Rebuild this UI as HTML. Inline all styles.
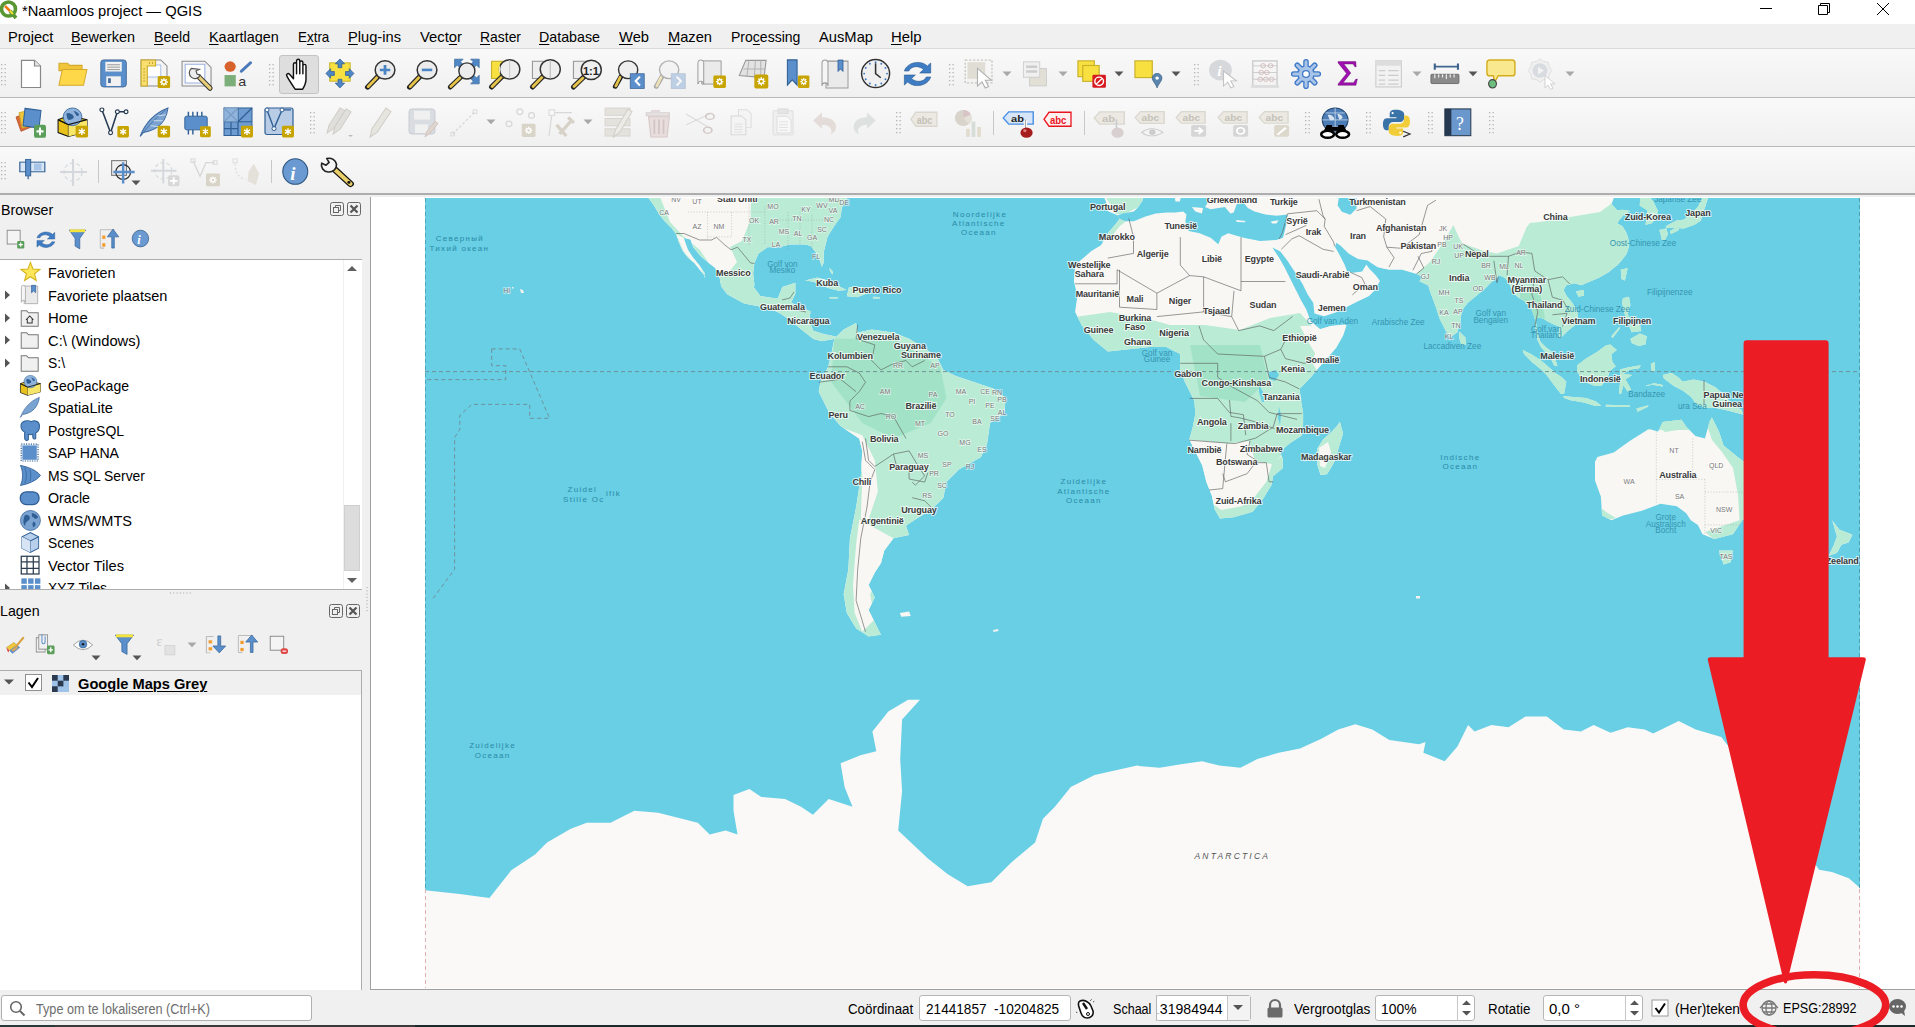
<!DOCTYPE html><html><head><meta charset="utf-8"><style>html,body{margin:0;padding:0}body{width:1915px;height:1027px;overflow:hidden;position:relative;background:#f0f0f0;font-family:"Liberation Sans",sans-serif}u{text-decoration-thickness:1px;text-underline-offset:2px}</style></head><body><div style="position:absolute;left:0px;top:0px;width:1915px;height:24px;background:#fff"></div>
<svg style="position:absolute;left:-1px;top:-1px" width="20" height="22" viewBox="0 0 20 22"><circle cx="9.5" cy="10" r="7" fill="none" stroke="#589632" stroke-width="3.6"/><path d="M11 12l6 7" stroke="#589632" stroke-width="3.6"/><path d="M6 7l5 5" stroke="#ee7913" stroke-width="2.5"/><path d="M11 12l3 3" stroke="#f0e130" stroke-width="2"/></svg>
<div style="position:absolute;left:22.00px;top:2.50px;font:normal 15px/15px 'Liberation Sans',sans-serif;color:#000;white-space:pre;transform:scaleX(0.9814);transform-origin:0 0">*Naamloos project — QGIS</div>
<svg style="position:absolute;left:1755px;top:2px" width="24" height="18" viewBox="0 0 24 18"><path d="M5 6.5h12" stroke="#000" stroke-width="1"/></svg>
<svg style="position:absolute;left:1813px;top:0px" width="24" height="20" viewBox="0 0 24 20"><path d="M5.5 5.5h9v9h-9z M7.5 5.5v-2h9v9h-2" fill="none" stroke="#000" stroke-width="1"/></svg>
<svg style="position:absolute;left:1872px;top:0px" width="24" height="20" viewBox="0 0 24 20"><path d="M5 3l12 12M17 3l-12 12" stroke="#000" stroke-width="1"/></svg>
<div style="position:absolute;left:0px;top:24px;width:1915px;height:25px;background:#f0f0f0"></div>
<div style="position:absolute;left:0px;top:48px;width:1915px;height:1px;background:#dadada"></div>
<div style="position:absolute;left:8.00px;top:28.80px;font:normal 15px/15px 'Liberation Sans',sans-serif;color:#000;white-space:pre;transform:scaleX(0.9724);transform-origin:0 0">Project</div>
<div style="position:absolute;left:71.40px;top:28.80px;font:normal 15px/15px 'Liberation Sans',sans-serif;color:#000;white-space:pre;transform:scaleX(0.9595);transform-origin:0 0"><u>B</u>ewerken</div>
<div style="position:absolute;left:154.00px;top:28.80px;font:normal 15px/15px 'Liberation Sans',sans-serif;color:#000;white-space:pre;transform:scaleX(0.9381);transform-origin:0 0"><u>B</u>eeld</div>
<div style="position:absolute;left:209.30px;top:28.80px;font:normal 15px/15px 'Liberation Sans',sans-serif;color:#000;white-space:pre;transform:scaleX(0.9606);transform-origin:0 0"><u>K</u>aartlagen</div>
<div style="position:absolute;left:297.70px;top:28.80px;font:normal 15px/15px 'Liberation Sans',sans-serif;color:#000;white-space:pre;transform:scaleX(0.8939);transform-origin:0 0">E<u>x</u>tra</div>
<div style="position:absolute;left:348.00px;top:28.80px;font:normal 15px/15px 'Liberation Sans',sans-serif;color:#000;white-space:pre;transform:scaleX(0.9778);transform-origin:0 0"><u>P</u>lug-ins</div>
<div style="position:absolute;left:420.00px;top:28.80px;font:normal 15px/15px 'Liberation Sans',sans-serif;color:#000;white-space:pre;transform:scaleX(0.9875);transform-origin:0 0">Vect<u>o</u>r</div>
<div style="position:absolute;left:480.00px;top:28.80px;font:normal 15px/15px 'Liberation Sans',sans-serif;color:#000;white-space:pre;transform:scaleX(0.9279);transform-origin:0 0"><u>R</u>aster</div>
<div style="position:absolute;left:539.40px;top:28.80px;font:normal 15px/15px 'Liberation Sans',sans-serif;color:#000;white-space:pre;transform:scaleX(0.9499);transform-origin:0 0"><u>D</u>atabase</div>
<div style="position:absolute;left:619.00px;top:28.80px;font:normal 15px/15px 'Liberation Sans',sans-serif;color:#000;white-space:pre;transform:scaleX(0.9811);transform-origin:0 0"><u>W</u>eb</div>
<div style="position:absolute;left:668.00px;top:28.80px;font:normal 15px/15px 'Liberation Sans',sans-serif;color:#000;white-space:pre;transform:scaleX(0.9771);transform-origin:0 0"><u>M</u>azen</div>
<div style="position:absolute;left:730.60px;top:28.80px;font:normal 15px/15px 'Liberation Sans',sans-serif;color:#000;white-space:pre;transform:scaleX(0.9353);transform-origin:0 0">Pro<u>c</u>essing</div>
<div style="position:absolute;left:819.00px;top:28.80px;font:normal 15px/15px 'Liberation Sans',sans-serif;color:#000;white-space:pre;transform:scaleX(0.9813);transform-origin:0 0">AusMap</div>
<div style="position:absolute;left:891.00px;top:28.80px;font:normal 15px/15px 'Liberation Sans',sans-serif;color:#000;white-space:pre;transform:scaleX(0.9916);transform-origin:0 0"><u>H</u>elp</div>
<div style="position:absolute;left:0px;top:49px;width:1915px;height:48px;background:linear-gradient(#f9f9f9,#f0f0f0)"></div>
<div style="position:absolute;left:0px;top:97px;width:1915px;height:1px;background:#b9b9b9"></div>
<div style="position:absolute;left:0px;top:98px;width:1915px;height:48px;background:linear-gradient(#f9f9f9,#f0f0f0)"></div>
<div style="position:absolute;left:0px;top:146px;width:1915px;height:1px;background:#b9b9b9"></div>
<div style="position:absolute;left:0px;top:147px;width:1915px;height:46px;background:linear-gradient(#f9f9f9,#f0f0f0)"></div>
<div style="position:absolute;left:0px;top:193px;width:1915px;height:2px;background:#adadad"></div>
<div style="position:absolute;left:0px;top:195px;width:1915px;height:2px;background:#f0f0f0"></div>
<svg style="position:absolute;left:0;top:0;overflow:visible" width="1" height="1"><rect x="1.0" y="64.0" width="1.3" height="1.3" fill="#b4b4b4"/><rect x="4.5" y="64.0" width="1.3" height="1.3" fill="#b4b4b4"/><rect x="1.0" y="68.0" width="1.3" height="1.3" fill="#b4b4b4"/><rect x="4.5" y="68.0" width="1.3" height="1.3" fill="#b4b4b4"/><rect x="1.0" y="72.0" width="1.3" height="1.3" fill="#b4b4b4"/><rect x="4.5" y="72.0" width="1.3" height="1.3" fill="#b4b4b4"/><rect x="1.0" y="76.0" width="1.3" height="1.3" fill="#b4b4b4"/><rect x="4.5" y="76.0" width="1.3" height="1.3" fill="#b4b4b4"/><rect x="1.0" y="80.0" width="1.3" height="1.3" fill="#b4b4b4"/><rect x="4.5" y="80.0" width="1.3" height="1.3" fill="#b4b4b4"/><rect x="1.0" y="84.0" width="1.3" height="1.3" fill="#b4b4b4"/><rect x="4.5" y="84.0" width="1.3" height="1.3" fill="#b4b4b4"/></svg>
<svg style="position:absolute;left:0;top:0;overflow:visible" width="1" height="1"><rect x="269.0" y="64.0" width="1.3" height="1.3" fill="#b4b4b4"/><rect x="272.5" y="64.0" width="1.3" height="1.3" fill="#b4b4b4"/><rect x="269.0" y="68.0" width="1.3" height="1.3" fill="#b4b4b4"/><rect x="272.5" y="68.0" width="1.3" height="1.3" fill="#b4b4b4"/><rect x="269.0" y="72.0" width="1.3" height="1.3" fill="#b4b4b4"/><rect x="272.5" y="72.0" width="1.3" height="1.3" fill="#b4b4b4"/><rect x="269.0" y="76.0" width="1.3" height="1.3" fill="#b4b4b4"/><rect x="272.5" y="76.0" width="1.3" height="1.3" fill="#b4b4b4"/><rect x="269.0" y="80.0" width="1.3" height="1.3" fill="#b4b4b4"/><rect x="272.5" y="80.0" width="1.3" height="1.3" fill="#b4b4b4"/><rect x="269.0" y="84.0" width="1.3" height="1.3" fill="#b4b4b4"/><rect x="272.5" y="84.0" width="1.3" height="1.3" fill="#b4b4b4"/></svg>
<svg style="position:absolute;left:0;top:0;overflow:visible" width="1" height="1"><rect x="949.0" y="64.0" width="1.3" height="1.3" fill="#b4b4b4"/><rect x="952.5" y="64.0" width="1.3" height="1.3" fill="#b4b4b4"/><rect x="949.0" y="68.0" width="1.3" height="1.3" fill="#b4b4b4"/><rect x="952.5" y="68.0" width="1.3" height="1.3" fill="#b4b4b4"/><rect x="949.0" y="72.0" width="1.3" height="1.3" fill="#b4b4b4"/><rect x="952.5" y="72.0" width="1.3" height="1.3" fill="#b4b4b4"/><rect x="949.0" y="76.0" width="1.3" height="1.3" fill="#b4b4b4"/><rect x="952.5" y="76.0" width="1.3" height="1.3" fill="#b4b4b4"/><rect x="949.0" y="80.0" width="1.3" height="1.3" fill="#b4b4b4"/><rect x="952.5" y="80.0" width="1.3" height="1.3" fill="#b4b4b4"/><rect x="949.0" y="84.0" width="1.3" height="1.3" fill="#b4b4b4"/><rect x="952.5" y="84.0" width="1.3" height="1.3" fill="#b4b4b4"/></svg>
<svg style="position:absolute;left:0;top:0;overflow:visible" width="1" height="1"><rect x="1194.0" y="64.0" width="1.3" height="1.3" fill="#b4b4b4"/><rect x="1197.5" y="64.0" width="1.3" height="1.3" fill="#b4b4b4"/><rect x="1194.0" y="68.0" width="1.3" height="1.3" fill="#b4b4b4"/><rect x="1197.5" y="68.0" width="1.3" height="1.3" fill="#b4b4b4"/><rect x="1194.0" y="72.0" width="1.3" height="1.3" fill="#b4b4b4"/><rect x="1197.5" y="72.0" width="1.3" height="1.3" fill="#b4b4b4"/><rect x="1194.0" y="76.0" width="1.3" height="1.3" fill="#b4b4b4"/><rect x="1197.5" y="76.0" width="1.3" height="1.3" fill="#b4b4b4"/><rect x="1194.0" y="80.0" width="1.3" height="1.3" fill="#b4b4b4"/><rect x="1197.5" y="80.0" width="1.3" height="1.3" fill="#b4b4b4"/><rect x="1194.0" y="84.0" width="1.3" height="1.3" fill="#b4b4b4"/><rect x="1197.5" y="84.0" width="1.3" height="1.3" fill="#b4b4b4"/></svg>
<svg style="position:absolute;left:15.00px;top:59.07px;overflow:visible" width="32.00" height="29.87" viewBox="0 0 32 32" preserveAspectRatio="none"><path d="M6.5 1.5h13l6 6v23h-19z" fill="#fff" stroke="#888" stroke-width="1.2"/><path d="M19.5 1.5v6h6" fill="#e8e8e8" stroke="#888" stroke-width="1.2"/></svg>
<svg style="position:absolute;left:57.07px;top:56.71px;overflow:visible" width="30.90" height="33.52" viewBox="0 0 32 32" preserveAspectRatio="none"><path d="M2 6h9l2 2h13v5H2z" fill="#f0c53a" stroke="#d4a82a" stroke-width="1"/><path d="M2 27L5.5 12H31L27.5 27z" fill="#ffd84a" stroke="#d4a82a" stroke-width="1"/></svg>
<svg style="position:absolute;left:99.18px;top:58.07px;overflow:visible" width="29.14" height="30.86" viewBox="0 0 32 32" preserveAspectRatio="none"><rect x="2" y="2" width="28" height="28" rx="3" fill="#5b8fcb" stroke="#41699a" stroke-width="1"/><rect x="7" y="4" width="18" height="10" fill="#f2f2f2"/><path d="M9 7h14M9 9.5h14M9 12h14" stroke="#888" stroke-width="0.9"/><rect x="8" y="19" width="16" height="10" fill="#f2f2f2"/><rect x="10" y="21" width="3" height="5" fill="#41699a"/></svg>
<svg style="position:absolute;left:137.89px;top:57.00px;overflow:visible" width="33.14" height="32.00" viewBox="0 0 32 32" preserveAspectRatio="none"><path d="M3 3h19l6 6v20H3z" fill="#f4f4f4" stroke="#8a8a8a"/><path d="M8 8h14v12H8z" fill="#fff" stroke="#9ab0e0" stroke-width="0.8"/><path d="M3 3h14v6H9v20H3z" fill="#f8df6f" stroke="#c9a826"/><path d="M5 12h2M5 15h2M5 18h2M5 21h2M5 24h2M11 5v2M14 5v2" stroke="#b8941c" stroke-width="0.8"/><rect x="19" y="19" width="12" height="12" rx="1.5" fill="#c8a400"/><g transform="translate(25.0,25.0)" stroke="#fff" stroke-width="1.3" fill="none"><circle r="2"/><path d="M0-3.8V-2.3M0 2.3V3.8M-3.8 0H-2.3M2.3 0H3.8M-2.7-2.7l1.1 1.1M1.6 1.6l1.1 1.1M-2.7 2.7l1.1-1.1M1.6-1.6l1.1-1.1"/></g></svg>
<svg style="position:absolute;left:179.93px;top:56.85px;overflow:visible" width="33.14" height="33.23" viewBox="0 0 32 32" preserveAspectRatio="none"><path d="M2 4h22l6 6v18H2z" fill="#f4f4f4" stroke="#8a8a8a"/><path d="M5 7h19v18H5z" fill="#fff" stroke="#9ab0e0" stroke-width="1"/><path d="M29 30L18 19" stroke="#333" stroke-width="5" stroke-linecap="round"/><path d="M29 30L18 19" stroke="#e9cf78" stroke-width="3" stroke-linecap="round"/><path d="M11 11a5.5 5.5 0 1 0 8.5 6.5l-3-1-1-3 3-1.5z" fill="#eee" stroke="#555" stroke-width="1.2"/></svg>
<svg style="position:absolute;left:222.45px;top:58.64px;overflow:visible" width="32.63" height="30.19" viewBox="0 0 32 32" preserveAspectRatio="none"><circle cx="8" cy="8" r="5.5" fill="#d8622c"/><path d="M19 13L28 4" stroke="#4a78b8" stroke-width="3" stroke-linecap="round"/><rect x="2.5" y="17" width="11" height="12" fill="#7cae7a"/><text x="16" y="28.5" font-family="Liberation Sans" font-size="14" fill="#333">a</text></svg>
<div style="position:absolute;left:279px;top:55px;width:40px;height:39px;background:#dedede;border:1px solid #c4c4c4;border-radius:3px;box-sizing:border-box"></div>
<svg style="position:absolute;left:284.22px;top:56.78px;overflow:visible" width="35.56" height="35.56" viewBox="0 0 32 32" preserveAspectRatio="none"><path d="M10 29c-2-3-6-9-7.5-12-.8-1.6 1.2-2.8 2.5-1.5l3.5 4V6.5c0-1.8 2.8-1.8 2.8 0V15V3.5c0-1.9 2.9-1.9 2.9 0V15V5c0-1.8 2.8-1.8 2.8 0v10V8c0-1.8 2.8-1.8 2.8 0v12c0 4-1.5 6.5-3 9z" fill="#fff" stroke="#111" stroke-width="1.3" stroke-linejoin="round"/></svg>
<svg style="position:absolute;left:325.07px;top:58.03px;overflow:visible" width="29.87" height="30.93" viewBox="0 0 32 32" preserveAspectRatio="none"><rect x="5" y="5" width="22" height="19" fill="#f7e03f" stroke="#c9b02b"/><g fill="#4f86c6" stroke="#2f5f94" stroke-width="0.8"><path d="M16 1l5 5h-3v4h-4V6h-3z"/><path d="M16 31l5-5h-3v-4h-4v4h-3z"/><path d="M1 16l5-5v3h4v4H6v3z"/><path d="M31 16l-5-5v3h-4v4h4v3z"/></g></svg>
<svg style="position:absolute;left:362.52px;top:56.77px;overflow:visible" width="37.12" height="34.46" viewBox="0 0 32 32" preserveAspectRatio="none"><path d="M12.9 18.1L4 28" stroke="#222" stroke-width="4.6" stroke-linecap="round"/><path d="M11.9 19.1L4.5 27.5" stroke="#e6c34a" stroke-width="2.6" stroke-linecap="round"/><circle cx="19" cy="12" r="8.5" fill="#ececec" stroke="#333" stroke-width="1.3"/><path d="M19 7.5v9M14.5 12h9" stroke="#4a84c4" stroke-width="2.4"/></svg>
<svg style="position:absolute;left:404.52px;top:56.77px;overflow:visible" width="37.12" height="34.46" viewBox="0 0 32 32" preserveAspectRatio="none"><path d="M12.9 18.1L4 28" stroke="#222" stroke-width="4.6" stroke-linecap="round"/><path d="M11.9 19.1L4.5 27.5" stroke="#e6c34a" stroke-width="2.6" stroke-linecap="round"/><circle cx="19" cy="12" r="8.5" fill="#ececec" stroke="#333" stroke-width="1.3"/><path d="M14.5 12h9" stroke="#4a84c4" stroke-width="2.4"/></svg>
<svg style="position:absolute;left:445.79px;top:56.85px;overflow:visible" width="34.29" height="34.37" viewBox="0 0 32 32" preserveAspectRatio="none"><g fill="#4f86c6" stroke="#2f5f94" stroke-width="0.6"><path d="M8 2h8l-2.5 2.5 3 3-3 3-3-3L8 10z"/><path d="M31 2v8l-2.5-2.5-3 3-3-3 3-3L23 2z"/><path d="M31 25v-8l-2.5 2.5-3-3-3 3 3 3-2.5 2.5z"/></g><path d="M14.1 18.4L4 28" stroke="#222" stroke-width="4.6" stroke-linecap="round"/><path d="M13.1 19.4L4.5 27.5" stroke="#e6c34a" stroke-width="2.6" stroke-linecap="round"/><circle cx="19.5" cy="13" r="7.5" fill="#ececec" stroke="#333" stroke-width="1.3"/></svg>
<svg style="position:absolute;left:486.60px;top:56.85px;overflow:visible" width="36.23" height="34.37" viewBox="0 0 32 32" preserveAspectRatio="none"><rect x="4" y="4" width="12" height="16" fill="#f7e03f" stroke="#c9b02b"/><path d="M13.5 18.0L4 28" stroke="#222" stroke-width="4.6" stroke-linecap="round"/><path d="M12.5 19.0L4.5 27.5" stroke="#e6c34a" stroke-width="2.6" stroke-linecap="round"/><circle cx="20" cy="11.5" r="9" fill="#eee" stroke="#333" stroke-width="1.3"/><path d="M20 3v17" stroke="#ccc" stroke-width="1"/><path d="M11.5 7a9 9 0 0 0 0 9" fill="#f0e6b0"/></svg>
<svg style="position:absolute;left:528.16px;top:56.85px;overflow:visible" width="35.62" height="34.37" viewBox="0 0 32 32" preserveAspectRatio="none"><rect x="4" y="4" width="12" height="16" fill="#eee" stroke="#999"/><path d="M13.5 18.0L4 28" stroke="#222" stroke-width="4.6" stroke-linecap="round"/><path d="M12.5 19.0L4.5 27.5" stroke="#e6c34a" stroke-width="2.6" stroke-linecap="round"/><circle cx="20" cy="11.5" r="9" fill="#eee" stroke="#333" stroke-width="1.3"/><path d="M20 3v17" stroke="#bbb" stroke-width="1"/></svg>
<svg style="position:absolute;left:569.16px;top:56.85px;overflow:visible" width="35.62" height="34.37" viewBox="0 0 32 32" preserveAspectRatio="none"><rect x="4" y="4" width="12" height="16" fill="#eee" stroke="#999"/><path d="M13.5 18.5L4 28" stroke="#222" stroke-width="4.6" stroke-linecap="round"/><path d="M12.5 19.5L4.5 27.5" stroke="#e6c34a" stroke-width="2.6" stroke-linecap="round"/><circle cx="20" cy="12" r="9" fill="#eee" stroke="#333" stroke-width="1.3"/><text x="12.5" y="17" font-family="Liberation Sans" font-weight="bold" font-size="10" fill="#222">1:1</text></svg>
<svg style="position:absolute;left:610.79px;top:58.53px;overflow:visible" width="34.29" height="31.44" viewBox="0 0 32 32" preserveAspectRatio="none"><g><path d="M9.5 17.5L4 28" stroke="#222" stroke-width="4.6" stroke-linecap="round"/><path d="M8.5 18.5L4.5 27.5" stroke="#e6c34a" stroke-width="2.6" stroke-linecap="round"/><circle cx="16" cy="11" r="9" fill="#eee" stroke="#333" stroke-width="1.3"/><rect x="18" y="15" width="13" height="15" fill="#5b8fcb" stroke="#41699a" stroke-width="0.8"/><path d="M27 18l-4 4.5 4 4.5" fill="none" stroke="#fff" stroke-width="2"/></g></svg>
<svg style="position:absolute;left:651.79px;top:58.53px;overflow:visible" width="34.29" height="31.44" viewBox="0 0 32 32" preserveAspectRatio="none"><g opacity="0.35"><path d="M9.5 17.5L4 28" stroke="#222" stroke-width="4.6" stroke-linecap="round"/><path d="M8.5 18.5L4.5 27.5" stroke="#e6c34a" stroke-width="2.6" stroke-linecap="round"/><circle cx="16" cy="11" r="9" fill="#eee" stroke="#333" stroke-width="1.3"/><rect x="18" y="15" width="13" height="15" fill="#5b8fcb" stroke="#41699a" stroke-width="0.8"/><path d="M23 18l4 4.5-4 4.5" fill="none" stroke="#fff" stroke-width="2"/></g></svg>
<svg style="position:absolute;left:696.07px;top:58.07px;overflow:visible" width="30.90" height="30.90" viewBox="0 0 32 32" preserveAspectRatio="none"><path d="M6 3h20v24H6z" fill="#eaeaea" stroke="#999"/><path d="M2 5a3 3 0 0 1 6 0v22a3 3 0 0 0-6 0z" fill="#f5f5f5" stroke="#999"/><rect x="18" y="18" width="13" height="13" rx="1.5" fill="#c8a400"/><g transform="translate(24.5,24.5)" stroke="#fff" stroke-width="1.3" fill="none"><circle r="2"/><path d="M0-3.8V-2.3M0 2.3V3.8M-3.8 0H-2.3M2.3 0H3.8M-2.7-2.7l1.1 1.1M1.6 1.6l1.1 1.1M-2.7 2.7l1.1-1.1M1.6-1.6l1.1-1.1"/></g></svg>
<svg style="position:absolute;left:734.70px;top:54.62px;overflow:visible" width="34.37" height="34.46" viewBox="0 0 32 32" preserveAspectRatio="none"><path d="M4 19L10 5h19l-2 16z" fill="#e2e2e2" stroke="#999"/><path d="M8 13h20M13 5l-2 15M19 5l-1 16M24 5v16" stroke="#aaa" stroke-width="0.8" fill="none"/><rect x="18" y="18" width="13" height="13" rx="1.5" fill="#c8a400"/><g transform="translate(24.5,24.5)" stroke="#fff" stroke-width="1.3" fill="none"><circle r="2"/><path d="M0-3.8V-2.3M0 2.3V3.8M-3.8 0H-2.3M2.3 0H3.8M-2.7-2.7l1.1 1.1M1.6 1.6l1.1 1.1M-2.7 2.7l1.1-1.1M1.6-1.6l1.1-1.1"/></g></svg>
<svg style="position:absolute;left:782.60px;top:58.07px;overflow:visible" width="28.16" height="30.90" viewBox="0 0 32 32" preserveAspectRatio="none"><path d="M5 2h11v26l-5.5-5.5L5 28z" fill="#5b8fcb" stroke="#2f5f94" stroke-width="1.2"/><rect x="17" y="18" width="13" height="13" rx="1.5" fill="#c8a400"/><g transform="translate(23.5,24.5)" stroke="#fff" stroke-width="1.3" fill="none"><circle r="2"/><path d="M0-3.8V-2.3M0 2.3V3.8M-3.8 0H-2.3M2.3 0H3.8M-2.7-2.7l1.1 1.1M1.6 1.6l1.1 1.1M-2.7 2.7l1.1-1.1M1.6-1.6l1.1-1.1"/></g></svg>
<svg style="position:absolute;left:820.00px;top:57.93px;overflow:visible" width="32.00" height="33.19" viewBox="0 0 32 32" preserveAspectRatio="none"><path d="M6 3h22v26H6z" fill="#eaeaea" stroke="#999"/><path d="M2 5a3 3 0 0 1 6 0v22a3 3 0 0 0-6 0z" fill="#f5f5f5" stroke="#999"/><path d="M18 2h5v11l-2.5-2.5L18 13z" fill="#5b8fcb" stroke="#2f5f94" stroke-width="0.8"/></svg>
<svg style="position:absolute;left:859.41px;top:57.41px;overflow:visible" width="33.19" height="33.19" viewBox="0 0 32 32" preserveAspectRatio="none"><circle cx="16" cy="16" r="13.5" fill="#f0f0f0" stroke="#333" stroke-width="1.4"/><circle cx="27.0" cy="16.0" r="0.9" fill="#3a78c2"/><circle cx="25.5" cy="21.5" r="0.9" fill="#3a78c2"/><circle cx="21.5" cy="25.5" r="0.9" fill="#3a78c2"/><circle cx="16.0" cy="27.0" r="0.9" fill="#3a78c2"/><circle cx="10.5" cy="25.5" r="0.9" fill="#3a78c2"/><circle cx="6.5" cy="21.5" r="0.9" fill="#3a78c2"/><circle cx="5.0" cy="16.0" r="0.9" fill="#3a78c2"/><circle cx="6.5" cy="10.5" r="0.9" fill="#3a78c2"/><circle cx="10.5" cy="6.5" r="0.9" fill="#3a78c2"/><circle cx="16.0" cy="5.0" r="0.9" fill="#3a78c2"/><circle cx="21.5" cy="6.5" r="0.9" fill="#3a78c2"/><circle cx="25.5" cy="10.5" r="0.9" fill="#3a78c2"/><path d="M16 6v10l5 4" fill="none" stroke="#333" stroke-width="1.5"/></svg>
<svg style="position:absolute;left:900.32px;top:58.00px;overflow:visible" width="35.07" height="32.00" viewBox="0 0 32 32" preserveAspectRatio="none"><path d="M4 13C6 5 18 1 25 8l3-3v10H18l3.5-3.5C17 7 10 8 8 13z" fill="#3e7cc4" stroke="#2a5a92" stroke-width="0.6"/><path d="M28 19C26 27 14 31 7 24l-3 3V17h10l-3.5 3.5C15 25 22 24 24 19z" fill="#3e7cc4" stroke="#2a5a92" stroke-width="0.6"/></svg>
<svg style="position:absolute;left:962.77px;top:57.93px;overflow:visible" width="35.69" height="33.19" viewBox="0 0 32 32" preserveAspectRatio="none"><rect x="2" y="2" width="24" height="22" fill="none" stroke="#c8c8c0" stroke-width="1.2" stroke-dasharray="2 1.5"/><rect x="4" y="4" width="16" height="16" fill="#e0ddd4"/><path d="M13 10v17l4-4 3 6 3-1.5-3-6h5.5z" fill="#fff" stroke="#b0b0b0" stroke-width="1"/></svg>
<svg style="position:absolute;left:1001.7px;top:71.0px" width="10" height="6"><path d="M0.5 0.5h9l-4.5 4.8z" fill="#a8a8a8"/></svg>
<svg style="position:absolute;left:1021.44px;top:59.12px;overflow:visible" width="27.26" height="30.72" viewBox="0 0 32 32" preserveAspectRatio="none"><rect x="10" y="10" width="20" height="18" fill="#e2dfd6" stroke="#ccc"/><rect x="3" y="3" width="19" height="16" fill="#f0f0f0" stroke="#ccc"/><path d="M6 8h13M6 13h13" stroke="#ccc" stroke-width="2.5"/></svg>
<svg style="position:absolute;left:1057.5px;top:71.0px" width="10" height="6"><path d="M0.5 0.5h9l-4.5 4.8z" fill="#a8a8a8"/></svg>
<svg style="position:absolute;left:1076.07px;top:59.14px;overflow:visible" width="30.90" height="29.79" viewBox="0 0 32 32" preserveAspectRatio="none"><rect x="2" y="2" width="17" height="17" fill="#f7e03f" stroke="#c9b02b" stroke-width="1.2"/><rect x="7" y="7" width="17" height="17" fill="#f7e03f" stroke="#c9b02b" stroke-width="1.2"/><rect x="17" y="17" width="14" height="14" rx="1.5" fill="#d71920"/><circle cx="24" cy="24" r="4.5" fill="none" stroke="#fff" stroke-width="1.5"/><path d="M21 27l6-6" stroke="#fff" stroke-width="1.5"/></svg>
<svg style="position:absolute;left:1113.7px;top:71.0px" width="10" height="6"><path d="M0.5 0.5h9l-4.5 4.8z" fill="#555"/></svg>
<svg style="position:absolute;left:1133.07px;top:59.14px;overflow:visible" width="30.86" height="29.79" viewBox="0 0 32 32" preserveAspectRatio="none"><rect x="2" y="2" width="18" height="18" fill="#f7e03f" stroke="#c9b02b" stroke-width="1.2"/><path d="M25 31c-1-4-5-7-5-10.5a5 5 0 0 1 10 0c0 3.5-4 6.5-5 10.5z" fill="#5a86ae" stroke="#3b6387" stroke-width="0.8"/><circle cx="25" cy="20.5" r="1.8" fill="#fff"/></svg>
<svg style="position:absolute;left:1170.6px;top:71.0px" width="10" height="6"><path d="M0.5 0.5h9l-4.5 4.8z" fill="#555"/></svg>
<svg style="position:absolute;left:1206.93px;top:58.13px;overflow:visible" width="33.12" height="29.87" viewBox="0 0 32 32" preserveAspectRatio="none"><circle cx="13" cy="13" r="11" fill="#d6d8dc"/><text x="10" y="19" font-family="Liberation Serif" font-style="italic" font-weight="bold" font-size="15" fill="#fff">i</text><path d="M16 14v16l4-4 3 6 3-1.5-3-6h5.5z" fill="#fff" stroke="#c0c0c0" stroke-width="1"/></svg>
<svg style="position:absolute;left:1250.07px;top:59.07px;overflow:visible" width="29.87" height="30.86" viewBox="0 0 32 32" preserveAspectRatio="none"><rect x="3" y="2" width="26" height="26" fill="none" stroke="#ccc" stroke-width="1.5"/><rect x="1" y="27" width="30" height="3" fill="#ddd"/><path d="M3 7h26" stroke="#ccc" stroke-width="1"/><ellipse cx="14" cy="7" rx="2.6" ry="2.2" fill="none" stroke="#d4baba" stroke-width="1"/><ellipse cx="22" cy="7" rx="2.6" ry="2.2" fill="none" stroke="#d4baba" stroke-width="1"/><path d="M3 14h26" stroke="#ccc" stroke-width="1"/><ellipse cx="12" cy="14" rx="2.6" ry="2.2" fill="none" stroke="#d4baba" stroke-width="1"/><ellipse cx="18" cy="14" rx="2.6" ry="2.2" fill="none" stroke="#d4baba" stroke-width="1"/><path d="M3 21h26" stroke="#ccc" stroke-width="1"/><ellipse cx="11" cy="21" rx="2.6" ry="2.2" fill="none" stroke="#d4baba" stroke-width="1"/><ellipse cx="17" cy="21" rx="2.6" ry="2.2" fill="none" stroke="#d4baba" stroke-width="1"/><ellipse cx="23" cy="21" rx="2.6" ry="2.2" fill="none" stroke="#d4baba" stroke-width="1"/></svg>
<svg style="position:absolute;left:1290.00px;top:58.00px;overflow:visible" width="32.00" height="32.00" viewBox="0 0 32 32" preserveAspectRatio="none"><path d="M16 16L16.00 3.70M16 16L24.70 7.30M16 16L28.30 16.00M16 16L24.70 24.70M16 16L16.00 28.30M16 16L7.30 24.70M16 16L3.70 16.00M16 16L7.30 7.30" stroke="#3f78c8" stroke-width="5.6" stroke-linecap="round"/><circle cx="16" cy="16" r="8.8" fill="#3f78c8"/><path d="M16 16L16.00 3.70M16 16L24.70 7.30M16 16L28.30 16.00M16 16L24.70 24.70M16 16L16.00 28.30M16 16L7.30 24.70M16 16L3.70 16.00M16 16L7.30 7.30" stroke="#a8c5e8" stroke-width="3.0" stroke-linecap="round"/><circle cx="16" cy="16" r="7.4" fill="#a8c5e8"/><circle cx="16" cy="16" r="3.4" fill="#fff" stroke="#3f78c8" stroke-width="1.3"/></svg>
<svg style="position:absolute;left:1335.42px;top:59.28px;overflow:visible" width="24.67" height="27.59" viewBox="0 0 32 32" preserveAspectRatio="none"><path d="M4 3h23l0.5 6h-1.8l-2.2-3.2H11.5l9 10.5-10 11.2h13.5l3.2-4.2h1.8l-1.8 7.2H4v-1.5l11-12.2L4 4.5z" fill="#a010b0" stroke="#5a0a60" stroke-width="0.5"/></svg>
<svg style="position:absolute;left:1374.11px;top:59.07px;overflow:visible" width="30.22" height="30.81" viewBox="0 0 32 32" preserveAspectRatio="none"><rect x="2" y="2" width="27" height="27" fill="#f2f2f2" stroke="#ccc" stroke-width="1.2"/><rect x="2" y="2" width="27" height="5" fill="#ddd"/><path d="M5 12h7M15 12h11M5 17h7M15 17h11M5 22h7M15 22h11M5 26h7M15 26h11" stroke="#ccc" stroke-width="1.3"/></svg>
<svg style="position:absolute;left:1411.6px;top:71.0px" width="10" height="6"><path d="M0.5 0.5h9l-4.5 4.8z" fill="#a8a8a8"/></svg>
<svg style="position:absolute;left:1429.07px;top:62.46px;overflow:visible" width="30.90" height="24.62" viewBox="0 0 32 32" preserveAspectRatio="none"><path d="M6 6h24M6 2v8M30 2v8" stroke="#3f6590" stroke-width="2.2"/><rect x="2" y="16" width="29" height="12" rx="1" fill="#8a8a8a" stroke="#666"/><path d="M6 16v5M10 16v4M14 16v4M18 16v6M22 16v4M26 16v4" stroke="#eee" stroke-width="1.2"/></svg>
<svg style="position:absolute;left:1467.6px;top:71.0px" width="10" height="6"><path d="M0.5 0.5h9l-4.5 4.8z" fill="#555"/></svg>
<svg style="position:absolute;left:1486.07px;top:57.02px;overflow:visible" width="29.87" height="31.77" viewBox="0 0 32 32" preserveAspectRatio="none"><path d="M4 3h24a3 3 0 0 1 3 3v10a3 3 0 0 1-3 3H13l-4 7-1-7H4a3 3 0 0 1-3-3V6a3 3 0 0 1 3-3z" fill="#fae88f" stroke="#d4ad1c" stroke-width="1.5"/><circle cx="7" cy="27" r="4.2" fill="#6ebf7f" stroke="#444" stroke-width="1.2"/></svg>
<svg style="position:absolute;left:1527.00px;top:58.03px;overflow:visible" width="32.00" height="30.97" viewBox="0 0 32 32" preserveAspectRatio="none"><polygon points="25.0,13.0 22.2,16.8 21.5,21.5 16.8,22.2 13.0,25.0 9.2,22.2 4.5,21.5 3.8,16.8 1.0,13.0 3.8,9.2 4.5,4.5 9.2,3.8 13.0,1.0 16.8,3.8 21.5,4.5 22.2,9.2" fill="#f0f0f0" stroke="#ddd" stroke-width="1"/><circle cx="13" cy="13" r="7.5" fill="#d8dbe0"/><path d="M11 9v8l6-4z" fill="#f3f3f3"/><path d="M18 18v13l3-3 2.5 4.5 2.5-1.2-2.5-4.5h4.5z" fill="#fff" stroke="#d0d0d0"/></svg>
<svg style="position:absolute;left:1565.0px;top:71.0px" width="10" height="6"><path d="M0.5 0.5h9l-4.5 4.8z" fill="#a8a8a8"/></svg>
<svg style="position:absolute;left:0;top:0;overflow:visible" width="1" height="1"><rect x="1.0" y="112.0" width="1.3" height="1.3" fill="#b4b4b4"/><rect x="4.5" y="112.0" width="1.3" height="1.3" fill="#b4b4b4"/><rect x="1.0" y="116.0" width="1.3" height="1.3" fill="#b4b4b4"/><rect x="4.5" y="116.0" width="1.3" height="1.3" fill="#b4b4b4"/><rect x="1.0" y="120.0" width="1.3" height="1.3" fill="#b4b4b4"/><rect x="4.5" y="120.0" width="1.3" height="1.3" fill="#b4b4b4"/><rect x="1.0" y="124.0" width="1.3" height="1.3" fill="#b4b4b4"/><rect x="4.5" y="124.0" width="1.3" height="1.3" fill="#b4b4b4"/><rect x="1.0" y="128.0" width="1.3" height="1.3" fill="#b4b4b4"/><rect x="4.5" y="128.0" width="1.3" height="1.3" fill="#b4b4b4"/><rect x="1.0" y="132.0" width="1.3" height="1.3" fill="#b4b4b4"/><rect x="4.5" y="132.0" width="1.3" height="1.3" fill="#b4b4b4"/></svg>
<svg style="position:absolute;left:0;top:0;overflow:visible" width="1" height="1"><rect x="310.0" y="112.0" width="1.3" height="1.3" fill="#b4b4b4"/><rect x="313.5" y="112.0" width="1.3" height="1.3" fill="#b4b4b4"/><rect x="310.0" y="116.0" width="1.3" height="1.3" fill="#b4b4b4"/><rect x="313.5" y="116.0" width="1.3" height="1.3" fill="#b4b4b4"/><rect x="310.0" y="120.0" width="1.3" height="1.3" fill="#b4b4b4"/><rect x="313.5" y="120.0" width="1.3" height="1.3" fill="#b4b4b4"/><rect x="310.0" y="124.0" width="1.3" height="1.3" fill="#b4b4b4"/><rect x="313.5" y="124.0" width="1.3" height="1.3" fill="#b4b4b4"/><rect x="310.0" y="128.0" width="1.3" height="1.3" fill="#b4b4b4"/><rect x="313.5" y="128.0" width="1.3" height="1.3" fill="#b4b4b4"/><rect x="310.0" y="132.0" width="1.3" height="1.3" fill="#b4b4b4"/><rect x="313.5" y="132.0" width="1.3" height="1.3" fill="#b4b4b4"/></svg>
<svg style="position:absolute;left:0;top:0;overflow:visible" width="1" height="1"><rect x="896.0" y="112.0" width="1.3" height="1.3" fill="#b4b4b4"/><rect x="899.5" y="112.0" width="1.3" height="1.3" fill="#b4b4b4"/><rect x="896.0" y="116.0" width="1.3" height="1.3" fill="#b4b4b4"/><rect x="899.5" y="116.0" width="1.3" height="1.3" fill="#b4b4b4"/><rect x="896.0" y="120.0" width="1.3" height="1.3" fill="#b4b4b4"/><rect x="899.5" y="120.0" width="1.3" height="1.3" fill="#b4b4b4"/><rect x="896.0" y="124.0" width="1.3" height="1.3" fill="#b4b4b4"/><rect x="899.5" y="124.0" width="1.3" height="1.3" fill="#b4b4b4"/><rect x="896.0" y="128.0" width="1.3" height="1.3" fill="#b4b4b4"/><rect x="899.5" y="128.0" width="1.3" height="1.3" fill="#b4b4b4"/><rect x="896.0" y="132.0" width="1.3" height="1.3" fill="#b4b4b4"/><rect x="899.5" y="132.0" width="1.3" height="1.3" fill="#b4b4b4"/></svg>
<svg style="position:absolute;left:0;top:0;overflow:visible" width="1" height="1"><rect x="1305.0" y="112.0" width="1.3" height="1.3" fill="#b4b4b4"/><rect x="1308.5" y="112.0" width="1.3" height="1.3" fill="#b4b4b4"/><rect x="1305.0" y="116.0" width="1.3" height="1.3" fill="#b4b4b4"/><rect x="1308.5" y="116.0" width="1.3" height="1.3" fill="#b4b4b4"/><rect x="1305.0" y="120.0" width="1.3" height="1.3" fill="#b4b4b4"/><rect x="1308.5" y="120.0" width="1.3" height="1.3" fill="#b4b4b4"/><rect x="1305.0" y="124.0" width="1.3" height="1.3" fill="#b4b4b4"/><rect x="1308.5" y="124.0" width="1.3" height="1.3" fill="#b4b4b4"/><rect x="1305.0" y="128.0" width="1.3" height="1.3" fill="#b4b4b4"/><rect x="1308.5" y="128.0" width="1.3" height="1.3" fill="#b4b4b4"/><rect x="1305.0" y="132.0" width="1.3" height="1.3" fill="#b4b4b4"/><rect x="1308.5" y="132.0" width="1.3" height="1.3" fill="#b4b4b4"/></svg>
<svg style="position:absolute;left:0;top:0;overflow:visible" width="1" height="1"><rect x="1366.0" y="112.0" width="1.3" height="1.3" fill="#b4b4b4"/><rect x="1369.5" y="112.0" width="1.3" height="1.3" fill="#b4b4b4"/><rect x="1366.0" y="116.0" width="1.3" height="1.3" fill="#b4b4b4"/><rect x="1369.5" y="116.0" width="1.3" height="1.3" fill="#b4b4b4"/><rect x="1366.0" y="120.0" width="1.3" height="1.3" fill="#b4b4b4"/><rect x="1369.5" y="120.0" width="1.3" height="1.3" fill="#b4b4b4"/><rect x="1366.0" y="124.0" width="1.3" height="1.3" fill="#b4b4b4"/><rect x="1369.5" y="124.0" width="1.3" height="1.3" fill="#b4b4b4"/><rect x="1366.0" y="128.0" width="1.3" height="1.3" fill="#b4b4b4"/><rect x="1369.5" y="128.0" width="1.3" height="1.3" fill="#b4b4b4"/><rect x="1366.0" y="132.0" width="1.3" height="1.3" fill="#b4b4b4"/><rect x="1369.5" y="132.0" width="1.3" height="1.3" fill="#b4b4b4"/></svg>
<svg style="position:absolute;left:0;top:0;overflow:visible" width="1" height="1"><rect x="1428.0" y="112.0" width="1.3" height="1.3" fill="#b4b4b4"/><rect x="1431.5" y="112.0" width="1.3" height="1.3" fill="#b4b4b4"/><rect x="1428.0" y="116.0" width="1.3" height="1.3" fill="#b4b4b4"/><rect x="1431.5" y="116.0" width="1.3" height="1.3" fill="#b4b4b4"/><rect x="1428.0" y="120.0" width="1.3" height="1.3" fill="#b4b4b4"/><rect x="1431.5" y="120.0" width="1.3" height="1.3" fill="#b4b4b4"/><rect x="1428.0" y="124.0" width="1.3" height="1.3" fill="#b4b4b4"/><rect x="1431.5" y="124.0" width="1.3" height="1.3" fill="#b4b4b4"/><rect x="1428.0" y="128.0" width="1.3" height="1.3" fill="#b4b4b4"/><rect x="1431.5" y="128.0" width="1.3" height="1.3" fill="#b4b4b4"/><rect x="1428.0" y="132.0" width="1.3" height="1.3" fill="#b4b4b4"/><rect x="1431.5" y="132.0" width="1.3" height="1.3" fill="#b4b4b4"/></svg>
<svg style="position:absolute;left:0;top:0;overflow:visible" width="1" height="1"><rect x="1489.0" y="112.0" width="1.3" height="1.3" fill="#b4b4b4"/><rect x="1492.5" y="112.0" width="1.3" height="1.3" fill="#b4b4b4"/><rect x="1489.0" y="116.0" width="1.3" height="1.3" fill="#b4b4b4"/><rect x="1492.5" y="116.0" width="1.3" height="1.3" fill="#b4b4b4"/><rect x="1489.0" y="120.0" width="1.3" height="1.3" fill="#b4b4b4"/><rect x="1492.5" y="120.0" width="1.3" height="1.3" fill="#b4b4b4"/><rect x="1489.0" y="124.0" width="1.3" height="1.3" fill="#b4b4b4"/><rect x="1492.5" y="124.0" width="1.3" height="1.3" fill="#b4b4b4"/><rect x="1489.0" y="128.0" width="1.3" height="1.3" fill="#b4b4b4"/><rect x="1492.5" y="128.0" width="1.3" height="1.3" fill="#b4b4b4"/><rect x="1489.0" y="132.0" width="1.3" height="1.3" fill="#b4b4b4"/><rect x="1492.5" y="132.0" width="1.3" height="1.3" fill="#b4b4b4"/></svg>
<svg style="position:absolute;left:15.00px;top:103.63px;overflow:visible" width="32.00" height="34.96" viewBox="0 0 32 32" preserveAspectRatio="none"><path d="M1 12l13-5 5 13-13 5z" fill="#db6b35" stroke="#b5532a" stroke-width="0.8"/><path d="M4 8l13-3 3 14-13 3z" fill="#f0c53a" stroke="#c9a52a" stroke-width="0.8"/><path d="M10 4l16 2-2 16-16-2z" fill="#5b8fcb" stroke="#2f5f94" stroke-width="1"/><rect x="19" y="19" width="12" height="12" rx="2" fill="#5a9e5a"/><path d="M25.0 21.5V28.5M21.5 25.0H28.5" stroke="#fff" stroke-width="2"/></svg>
<svg style="position:absolute;left:55.93px;top:106.03px;overflow:visible" width="33.10" height="31.47" viewBox="0 0 32 32" preserveAspectRatio="none"><path d="M2 14l10-4 18 4v12l-18 5-10-4z" fill="#e8c21a" stroke="#111" stroke-width="1"/><path d="M12 19v12M2 14l10 5 18-5" fill="none" stroke="#111" stroke-width="1"/><path d="M12 19l18-5v12l-18 5z" fill="#f7e66a"/><circle cx="16" cy="11" r="9" fill="#8fb3dd" stroke="#2f5f94" stroke-width="0.8"/><path d="M10 8c2-2 5 0 6 1s2 3 0 4-3 2-5 0zM17 5c2 0 4 2 5 3s-1 3-2 2z" fill="#2f5f94"/><path d="M2 14l10 5 18-5" fill="none" stroke="#111" stroke-width="1.2"/><rect x="19" y="20" width="12" height="12" rx="1.5" fill="#c8a400"/><g transform="translate(25.0,26.0)" stroke="#fff" stroke-width="1.4" fill="none"><path d="M0-3.5V3.5M-3-1.75L3 1.75M-3 1.75L3-1.75"/></g></svg>
<svg style="position:absolute;left:99.03px;top:107.05px;overflow:visible" width="30.93" height="30.45" viewBox="0 0 32 32" preserveAspectRatio="none"><path d="M3 3l9 24 7-22h8" fill="none" stroke="#263b53" stroke-width="1.6"/><circle cx="3" cy="3" r="2" fill="#fff" stroke="#263b53" stroke-width="1.2"/><circle cx="12" cy="27" r="2" fill="#fff" stroke="#263b53" stroke-width="1.2"/><circle cx="19" cy="5" r="2" fill="#fff" stroke="#263b53" stroke-width="1.2"/><circle cx="28" cy="5" r="2" fill="#fff" stroke="#263b53" stroke-width="1.2"/><rect x="19" y="20" width="12" height="12" rx="1.5" fill="#c8a400"/><g transform="translate(25.0,26.0)" stroke="#fff" stroke-width="1.4" fill="none"><path d="M0-3.5V3.5M-3-1.75L3 1.75M-3 1.75L3-1.75"/></g></svg>
<svg style="position:absolute;left:137.93px;top:106.03px;overflow:visible" width="33.10" height="31.47" viewBox="0 0 32 32" preserveAspectRatio="none"><path d="M2 31C6 20 14 8 29 2c-1 8-5 16-11 20-4 3-9 4-13 5z" fill="#7ba3d2" stroke="#3c6aa0" stroke-width="1"/><path d="M3 30C10 20 18 11 27 4" stroke="#3c6aa0" stroke-width="0.8" fill="none"/><path d="M12 20l8 1M15 15l9 0M19 10l8-1" stroke="#dfeaf7" stroke-width="0.8"/><rect x="19" y="20" width="12" height="12" rx="1.5" fill="#c8a400"/><g transform="translate(25.0,26.0)" stroke="#fff" stroke-width="1.4" fill="none"><path d="M0-3.5V3.5M-3-1.75L3 1.75M-3 1.75L3-1.75"/></g></svg>
<svg style="position:absolute;left:183.21px;top:108.36px;overflow:visible" width="28.69" height="29.14" viewBox="0 0 32 32" preserveAspectRatio="none"><rect x="2" y="9" width="25" height="15" rx="2" fill="#5b8fcb" stroke="#2f5f94"/><path d="M6 4v5M11 4v5M16 4v5M21 4v5M6 24v5M11 24v5" stroke="#2f5f94" stroke-width="1.6"/><rect x="19" y="20" width="12" height="12" rx="1.5" fill="#c8a400"/><g transform="translate(25.0,26.0)" stroke="#fff" stroke-width="1.4" fill="none"><path d="M0-3.5V3.5M-3-1.75L3 1.75M-3 1.75L3-1.75"/></g></svg>
<svg style="position:absolute;left:222.00px;top:106.03px;overflow:visible" width="32.00" height="31.47" viewBox="0 0 32 32" preserveAspectRatio="none"><rect x="2" y="2" width="28" height="28" fill="#6e9bd0" stroke="#2f5f94"/><path d="M2 2l14 14M16 2L2 16M16 2v28M2 16h28M30 2L16 16M2 23h14M9 16v14" stroke="#2f5f94" stroke-width="1.2" fill="none"/><rect x="2" y="2" width="14" height="14" fill="#a9c4e6" opacity="0.6"/><rect x="19" y="20" width="12" height="12" rx="1.5" fill="#c8a400"/><g transform="translate(25.0,26.0)" stroke="#fff" stroke-width="1.4" fill="none"><path d="M0-3.5V3.5M-3-1.75L3 1.75M-3 1.75L3-1.75"/></g></svg>
<svg style="position:absolute;left:263.00px;top:106.03px;overflow:visible" width="32.00" height="31.47" viewBox="0 0 32 32" preserveAspectRatio="none"><rect x="2" y="2" width="28" height="27" rx="2" fill="#b8cce6" stroke="#2f5f94" stroke-width="1.2"/><path d="M4 4l7 19 8-19h9" fill="none" stroke="#2f5f94" stroke-width="1.4"/><circle cx="4" cy="4" r="2" fill="#fff" stroke="#2f5f94"/><circle cx="11" cy="23" r="2" fill="#fff" stroke="#2f5f94"/><circle cx="19" cy="4" r="2" fill="#fff" stroke="#2f5f94"/><rect x="19" y="20" width="12" height="12" rx="1.5" fill="#c8a400"/><g transform="translate(25.0,26.0)" stroke="#fff" stroke-width="1.4" fill="none"><path d="M0-3.5V3.5M-3-1.75L3 1.75M-3 1.75L3-1.75"/></g></svg>
<svg style="position:absolute;left:325.49px;top:106.07px;overflow:visible" width="32.11" height="30.93" viewBox="0 0 32 32" preserveAspectRatio="none"><g fill="#e0dfdb" stroke="#cfcdc6" stroke-width="1"><path d="M2 28l2-8 11-18 5 3-11 18z"/><path d="M8 29l2-8 11-18 5 3-11 18z"/></g><path d="M23 30h5l-2.5 2z" fill="#bbb"/></svg>
<svg style="position:absolute;left:366.00px;top:105.93px;overflow:visible" width="32.00" height="33.14" viewBox="0 0 32 32" preserveAspectRatio="none"><path d="M4 30l2-8 14-20 5 3.5-14 20z" fill="#e6e5e0" stroke="#d0cec7" stroke-width="1"/></svg>
<svg style="position:absolute;left:407.00px;top:107.07px;overflow:visible" width="32.00" height="30.90" viewBox="0 0 32 32" preserveAspectRatio="none"><rect x="2" y="2" width="26" height="26" rx="3" fill="#d9dde2" stroke="#c8ccd2"/><rect x="7" y="4" width="16" height="9" fill="#f0f0f0"/><rect x="8" y="18" width="13" height="9" fill="#f0f0f0"/><path d="M18 31l2-6 8-10 3 2-8 10z" fill="#e0d6d0" stroke="#d0c4bc"/></svg>
<svg style="position:absolute;left:449.14px;top:108.14px;overflow:visible" width="29.71" height="29.71" viewBox="0 0 32 32" preserveAspectRatio="none"><path d="M4 28L28 4" stroke="#d8d8d8" stroke-width="1.4" stroke-dasharray="3 2"/><rect x="2" y="26" width="4" height="4" fill="none" stroke="#d8d8d8"/><rect x="26" y="2" width="4" height="4" fill="none" stroke="#d8d8d8"/></svg>
<svg style="position:absolute;left:486.0px;top:119.0px" width="10" height="6"><path d="M0.5 0.5h9l-4.5 4.8z" fill="#a8a8a8"/></svg>
<svg style="position:absolute;left:505.50px;top:108.07px;overflow:visible" width="31.47" height="29.87" viewBox="0 0 32 32" preserveAspectRatio="none"><circle cx="14" cy="4" r="3" fill="none" stroke="#d8d8d8" stroke-width="1.3"/><circle cx="26" cy="8" r="3" fill="none" stroke="#d8d8d8" stroke-width="1.3"/><circle cx="3" cy="17" r="3" fill="none" stroke="#d8d8d8" stroke-width="1.3"/><rect x="16" y="17" width="14" height="14" rx="1.5" fill="#d9d4c8"/><g transform="translate(23.0,24.0)" stroke="#fff" stroke-width="1.3" fill="none"><circle r="2"/><path d="M0-3.8V-2.3M0 2.3V3.8M-3.8 0H-2.3M2.3 0H3.8M-2.7-2.7l1.1 1.1M1.6 1.6l1.1 1.1M-2.7 2.7l1.1-1.1M1.6-1.6l1.1-1.1"/></g></svg>
<svg style="position:absolute;left:547.08px;top:108.14px;overflow:visible" width="30.77" height="29.79" viewBox="0 0 32 32" preserveAspectRatio="none"><rect x="2" y="2" width="6" height="6" fill="none" stroke="#d8d8d8"/><path d="M8 5h18M5 8L2 30" stroke="#d8d8d8" stroke-width="1.2"/><path d="M10 18l10 12M13 28l12-14M22 10l6 6" stroke="#d6d2c8" stroke-width="3.5"/></svg>
<svg style="position:absolute;left:583.0px;top:119.0px" width="10" height="6"><path d="M0.5 0.5h9l-4.5 4.8z" fill="#a8a8a8"/></svg>
<svg style="position:absolute;left:602.92px;top:104.89px;overflow:visible" width="33.23" height="33.14" viewBox="0 0 32 32" preserveAspectRatio="none"><rect x="2" y="3" width="24" height="7" fill="#e4e2dc" stroke="#d8d6d0"/><rect x="2" y="13" width="24" height="7" fill="#e4e2dc" stroke="#d8d6d0"/><rect x="2" y="23" width="24" height="7" fill="#e4e2dc" stroke="#d8d6d0"/><path d="M10 31l2-7 12-20 4 2.5-12 20z" fill="#ebebe8" stroke="#d0cec7"/></svg>
<svg style="position:absolute;left:643.70px;top:108.07px;overflow:visible" width="36.80" height="30.86" viewBox="0 0 32 32" preserveAspectRatio="none"><path d="M2 5h20v3H2z" fill="#e8e4e4" stroke="#d8d0d0"/><rect x="6" y="2" width="8" height="3" fill="#e2dada"/><path d="M4 9h18l-2 21H6z" fill="#e8dede" stroke="#d8c8c8"/><path d="M9 12v15M13 12v15M17 12v15" stroke="#d4c4c4" stroke-width="1.5"/></svg>
<svg style="position:absolute;left:684.96px;top:110.69px;overflow:visible" width="33.19" height="24.62" viewBox="0 0 32 32" preserveAspectRatio="none"><path d="M1 4l24 19M1 18L25 3" stroke="#d8d8d8" stroke-width="1.2"/><circle cx="22" cy="25" r="4" fill="none" stroke="#d4c8c8" stroke-width="1.6"/><circle cx="24" cy="7" r="4" fill="none" stroke="#d4c8c8" stroke-width="1.6"/></svg>
<svg style="position:absolute;left:728.89px;top:108.21px;overflow:visible" width="33.68" height="28.57" viewBox="0 0 32 32" preserveAspectRatio="none"><path d="M9 2h8l4 4v16H9z" fill="#f4f4f4" stroke="#ddd"/><path d="M2 9h10l4 4v17H2z" fill="#f4f4f4" stroke="#d8d8d8"/><path d="M5 18h8M5 21h8M5 24h8M5 27h8" stroke="#ddd" stroke-width="0.9"/></svg>
<svg style="position:absolute;left:771.00px;top:107.14px;overflow:visible" width="32.00" height="29.71" viewBox="0 0 32 32" preserveAspectRatio="none"><rect x="2" y="4" width="20" height="26" rx="1" fill="#efefef" stroke="#ddd"/><rect x="7" y="2" width="10" height="5" fill="#e4e4e4" stroke="#ddd"/><path d="M6 10h10l4 4v14H6z" fill="#f8f8f8" stroke="#ddd"/><path d="M8 16h9M8 19h9M8 22h9M8 25h9" stroke="#ddd" stroke-width="0.9"/></svg>
<svg style="position:absolute;left:811.00px;top:109.56px;overflow:visible" width="32.00" height="26.07" viewBox="0 0 32 32" preserveAspectRatio="none"><path d="M2 13L11 3v6c9 0 14 5 14 12 0 5-3 8-6 9 3-3 2-12-8-12v5z" fill="#e4dcd8"/></svg>
<svg style="position:absolute;left:847.30px;top:109.56px;overflow:visible" width="30.61" height="26.07" viewBox="0 0 32 32" preserveAspectRatio="none"><path d="M30 13L21 3v6c-9 0-14 5-14 12 0 5 3 8 6 9-3-3-2-12 8-12v5z" fill="#dde2e0"/></svg>
<svg style="position:absolute;left:909.07px;top:108.77px;overflow:visible" width="30.81" height="34.46" viewBox="0 0 32 32" preserveAspectRatio="none"><path d="M7 3h22v13H7L2 9.5z" fill="#ebe9e2" stroke="#dad7cf" stroke-width="1.3"/><text x="8" y="13.5" font-family="Liberation Sans" font-weight="bold" font-size="9.5" fill="#c4c1b8">abc</text></svg>
<svg style="position:absolute;left:954.07px;top:109.10px;overflow:visible" width="29.71" height="28.80" viewBox="0 0 32 32" preserveAspectRatio="none"><circle cx="10" cy="10" r="9" fill="#d8d4cc"/><path d="M10 10V1a9 9 0 0 1 8 5z" fill="#d8c4c4"/><path d="M10 10l8-4a9 9 0 0 1-2 11z" fill="#e4e0d8"/><rect x="13" y="22" width="4" height="9" fill="#e2dccf"/><rect x="19" y="14" width="4" height="17" fill="#d6dcd8"/><rect x="25" y="20" width="4" height="11" fill="#e2dccf"/></svg>
<div style="position:absolute;left:993.0px;top:111px;width:1px;height:24px;background:#c8c8c8"></div>
<svg style="position:absolute;left:1000.78px;top:109.16px;overflow:visible" width="35.56" height="30.25" viewBox="0 0 32 32" preserveAspectRatio="none"><path d="M7 3h22v13H7L2 9.5z" fill="#d6e6f8" stroke="#4a90e2" stroke-width="1.3"/><text x="9" y="13.5" font-family="Liberation Sans" font-weight="bold" font-size="10" fill="#222">ab</text><path d="M22 12v9" stroke="#fff" stroke-width="3"/><path d="M22 11v10" stroke="#aaa" stroke-width="1"/><circle cx="23" cy="25" r="5.5" fill="#a51d1d"/><circle cx="21.5" cy="23" r="1.5" fill="#e08080"/></svg>
<svg style="position:absolute;left:1042.00px;top:108.77px;overflow:visible" width="32.00" height="34.46" viewBox="0 0 32 32" preserveAspectRatio="none"><path d="M7 3h22v13H7L2 9.5z" fill="#fff0f0" stroke="#e8141e" stroke-width="1.3"/><text x="8" y="13.5" font-family="Liberation Sans" font-weight="bold" font-size="9.5" fill="#e8141e">abc</text></svg>
<div style="position:absolute;left:1084.0px;top:111px;width:1px;height:24px;background:#c8c8c8"></div>
<svg style="position:absolute;left:1091.78px;top:109.16px;overflow:visible" width="35.56" height="30.25" viewBox="0 0 32 32" preserveAspectRatio="none"><path d="M7 3h22v13H7L2 9.5z" fill="#ebe9e2" stroke="#dad7cf" stroke-width="1.3"/><text x="9" y="13.5" font-family="Liberation Sans" font-weight="bold" font-size="10" fill="#c4c1b8">ab</text><circle cx="23" cy="25" r="5.5" fill="#d8d0d0"/><path d="M22 11v10" stroke="#ccc" stroke-width="1.5"/></svg>
<svg style="position:absolute;left:1132.85px;top:109.31px;overflow:visible" width="34.37" height="28.69" viewBox="0 0 32 32" preserveAspectRatio="none"><path d="M7 3h22v13H7L2 9.5z" fill="#ebe9e2" stroke="#dad7cf" stroke-width="1.3"/><text x="8" y="13.5" font-family="Liberation Sans" font-weight="bold" font-size="9.5" fill="#c4c1b8">abc</text><path d="M8 26q9-8 20 0q-11 8-20 0z" fill="#f4f4f4" stroke="#ccc"/><circle cx="18" cy="26" r="3" fill="#ccc"/></svg>
<svg style="position:absolute;left:1173.86px;top:109.32px;overflow:visible" width="34.29" height="28.57" viewBox="0 0 32 32" preserveAspectRatio="none"><path d="M7 3h22v13H7L2 9.5z" fill="#ebe9e2" stroke="#dad7cf" stroke-width="1.3"/><text x="8" y="13.5" font-family="Liberation Sans" font-weight="bold" font-size="9.5" fill="#c4c1b8">abc</text><rect x="16" y="18" width="14" height="13" rx="2" fill="#d6d6d6"/><path d="M19 24.5h6M23 21l3.5 3.5L23 28" stroke="#fff" stroke-width="2" fill="none"/></svg>
<svg style="position:absolute;left:1215.86px;top:109.32px;overflow:visible" width="34.29" height="28.57" viewBox="0 0 32 32" preserveAspectRatio="none"><path d="M7 3h22v13H7L2 9.5z" fill="#ebe9e2" stroke="#dad7cf" stroke-width="1.3"/><text x="8" y="13.5" font-family="Liberation Sans" font-weight="bold" font-size="9.5" fill="#c4c1b8">abc</text><rect x="16" y="18" width="14" height="13" rx="2" fill="#d6d6d6"/><circle cx="23" cy="24.5" r="3.5" fill="none" stroke="#fff" stroke-width="1.8"/></svg>
<svg style="position:absolute;left:1256.86px;top:109.32px;overflow:visible" width="34.29" height="28.57" viewBox="0 0 32 32" preserveAspectRatio="none"><path d="M7 3h22v13H7L2 9.5z" fill="#ebe9e2" stroke="#dad7cf" stroke-width="1.3"/><text x="8" y="13.5" font-family="Liberation Sans" font-weight="bold" font-size="9.5" fill="#c4c1b8">abc</text><rect x="16" y="18" width="14" height="13" rx="2" fill="#ddd8cc"/><path d="M19 29l8-8" stroke="#fff" stroke-width="2"/></svg>
<svg style="position:absolute;left:1317.86px;top:107.01px;overflow:visible" width="34.29" height="31.79" viewBox="0 0 32 32" preserveAspectRatio="none"><circle cx="16" cy="13" r="12" fill="#4b7cb5" stroke="#1d3f6a" stroke-width="1"/><path d="M4 13h24M16 1v24M7 6h18M7 20h18" stroke="#c4d6ec" stroke-width="0.8"/><path d="M9 8c3-1 5 1 6 3s-2 3-4 2zM18 7c3 0 5 2 5 4l-3 2z" fill="#d6e2f0"/><ellipse cx="9" cy="27.5" rx="6" ry="3.5" fill="#fff" stroke="#000" stroke-width="2.4"/><ellipse cx="23" cy="27.5" rx="6" ry="3.5" fill="#fff" stroke="#000" stroke-width="2.4"/><path d="M5 25l3-7h5l1 6M27 25l-3-7h-5l-1 6" fill="#000"/><rect x="13" y="20" width="6" height="4" fill="#000"/></svg>
<svg style="position:absolute;left:1382.04px;top:108.14px;overflow:visible" width="30.86" height="29.79" viewBox="0 0 32 32" preserveAspectRatio="none"><path d="M14 2c-6 0-6 3-6 5v3h7v1H5c-3 0-4 3-4 6.5S2 24 5 24h2v-4c0-3 2-5 5-5h7c2 0 4-2 4-4V7c0-3-3-5-9-5z" fill="#3a73a8"/><path d="M16 30c6 0 6-3 6-5v-3h-7v-1h10c3 0 4-3 4-6.5S28 8 25 8h-2v4c0 3-2 5-5 5h-7c-2 0-4 2-4 4v4c0 3 3 5 9 5z" fill="#f2cd3a"/><circle cx="11" cy="5.5" r="1.2" fill="#fff"/><circle cx="19" cy="26.5" r="1.2" fill="#fff"/><path d="M22 25l7 3-7 3" fill="none" stroke="#333" stroke-width="1.3"/></svg>
<svg style="position:absolute;left:1443.14px;top:107.09px;overflow:visible" width="29.71" height="30.63" viewBox="0 0 32 32" preserveAspectRatio="none"><rect x="2" y="2" width="28" height="28" fill="#6a97cc" stroke="#1f2f42" stroke-width="1"/><rect x="2" y="2" width="7" height="28" fill="#25384f"/><text x="14" y="24" font-family="Liberation Serif" font-size="19" fill="#fff">?</text></svg>
<svg style="position:absolute;left:0;top:0;overflow:visible" width="1" height="1"><rect x="1.0" y="162.0" width="1.3" height="1.3" fill="#b4b4b4"/><rect x="4.5" y="162.0" width="1.3" height="1.3" fill="#b4b4b4"/><rect x="1.0" y="166.0" width="1.3" height="1.3" fill="#b4b4b4"/><rect x="4.5" y="166.0" width="1.3" height="1.3" fill="#b4b4b4"/><rect x="1.0" y="170.0" width="1.3" height="1.3" fill="#b4b4b4"/><rect x="4.5" y="170.0" width="1.3" height="1.3" fill="#b4b4b4"/><rect x="1.0" y="174.0" width="1.3" height="1.3" fill="#b4b4b4"/><rect x="4.5" y="174.0" width="1.3" height="1.3" fill="#b4b4b4"/><rect x="1.0" y="178.0" width="1.3" height="1.3" fill="#b4b4b4"/><rect x="4.5" y="178.0" width="1.3" height="1.3" fill="#b4b4b4"/></svg>
<svg style="position:absolute;left:19.17px;top:157.62px;overflow:visible" width="26.67" height="22.07" viewBox="0 0 32 32" preserveAspectRatio="none"><rect x="1" y="6" width="30" height="14" fill="#d9e6f5" stroke="#2f5f94" stroke-width="1.4"/><rect x="18" y="8" width="9" height="10" fill="#a8c4e6"/><rect x="8" y="2" width="6" height="24" fill="#5b8fcb" stroke="#2f5f94" stroke-width="1.2"/><path d="M11 26v5" stroke="#2f5f94" stroke-width="1.4"/></svg>
<svg style="position:absolute;left:58.50px;top:157.60px;overflow:visible" width="32.12" height="32.12" viewBox="0 0 32 32" preserveAspectRatio="none"><circle cx="14" cy="14" r="9" fill="none" stroke="#d8dde2" stroke-width="1.4" stroke-dasharray="4 2.5"/><path d="M14 1v27M1 14h27" stroke="#d4d8dc" stroke-width="2"/></svg>
<div style="position:absolute;left:97.5px;top:160px;width:1px;height:23px;background:#c8c8c8"></div>
<svg style="position:absolute;left:110.06px;top:159.06px;overflow:visible" width="26.29" height="26.17" viewBox="0 0 32 32" preserveAspectRatio="none"><rect x="2" y="2" width="18" height="18" fill="#f0f0f0" stroke="#777" stroke-width="1.3"/><circle cx="16" cy="16" r="9" fill="none" stroke="#333" stroke-width="1.6"/><path d="M16 4v26M4 16h26" stroke="#5b8fcb" stroke-width="3"/></svg>
<svg style="position:absolute;left:131.0px;top:180.0px" width="10" height="6"><path d="M0.5 0.5h9l-4.5 4.8z" fill="#555"/></svg>
<svg style="position:absolute;left:150.05px;top:157.69px;overflow:visible" width="30.40" height="29.23" viewBox="0 0 32 32" preserveAspectRatio="none"><circle cx="14" cy="14" r="9" fill="none" stroke="#d8dde2" stroke-width="1.4" stroke-dasharray="4 2.5"/><path d="M14 1v27M1 14h27" stroke="#d4d8dc" stroke-width="2"/><rect x="19" y="19" width="12" height="12" rx="2" fill="#d8d8d8"/><path d="M25 21v8M21 25h8" stroke="#fff" stroke-width="2"/></svg>
<svg style="position:absolute;left:190.00px;top:157.69px;overflow:visible" width="32.00" height="29.23" viewBox="0 0 32 32" preserveAspectRatio="none"><path d="M3 3l7 17 6-15h9" fill="none" stroke="#d8d8d8" stroke-width="1.4"/><rect x="1" y="1" width="4" height="4" fill="none" stroke="#d8d8d8"/><rect x="23" y="3" width="4" height="4" fill="none" stroke="#d8d8d8"/><rect x="16" y="17" width="14" height="14" rx="1.5" fill="#d9d4c8"/><g transform="translate(23.0,24.0)" stroke="#fff" stroke-width="1.3" fill="none"><circle r="2"/><path d="M0-3.8V-2.3M0 2.3V3.8M-3.8 0H-2.3M2.3 0H3.8M-2.7-2.7l1.1 1.1M1.6 1.6l1.1 1.1M-2.7 2.7l1.1-1.1M1.6-1.6l1.1-1.1"/></g></svg>
<svg style="position:absolute;left:231.96px;top:158.04px;overflow:visible" width="33.28" height="30.81" viewBox="0 0 32 32" preserveAspectRatio="none"><rect x="1" y="1" width="4" height="4" fill="none" stroke="#ddd"/><path d="M3 6c0 8 2 14 10 16" fill="none" stroke="#ddd" stroke-width="1.3" stroke-dasharray="2 2"/><path d="M16 14l5-8 5 10-3 12-8-4z" fill="#e4e0da"/></svg>
<div style="position:absolute;left:271.4px;top:160px;width:1px;height:23px;background:#c8c8c8"></div>
<svg style="position:absolute;left:281.21px;top:157.38px;overflow:visible" width="28.57" height="29.14" viewBox="0 0 32 32" preserveAspectRatio="none"><circle cx="16" cy="16" r="14" fill="#6a9ad1" stroke="#2d5580" stroke-width="1.2"/><text x="10.5" y="25" font-family="Liberation Serif" font-style="italic" font-weight="bold" font-size="21" fill="#fff">i</text></svg>
<svg style="position:absolute;left:319.35px;top:155.58px;overflow:visible" width="33.60" height="30.72" viewBox="0 0 32 32" preserveAspectRatio="none"><path d="M30 29L12 11" stroke="#111" stroke-width="6.5" stroke-linecap="round"/><path d="M30 29L12 11" stroke="#e9cf6a" stroke-width="4" stroke-linecap="round"/><path d="M2.6 7.4A7.2 7.2 0 1 0 7.4 2.6L9.6 6.6L6.6 9.6Z" fill="#f6f6f6" stroke="#222" stroke-width="1.6" stroke-linejoin="round"/><circle cx="28.5" cy="27.5" r="1.5" fill="#111"/></svg>
<div style="position:absolute;left:0px;top:197px;width:370px;height:793px;background:#f0f0f0"></div>
<div style="position:absolute;left:0.50px;top:202.10px;font:normal 15px/15px 'Liberation Sans',sans-serif;color:#000;white-space:pre;transform:scaleX(0.9488);transform-origin:0 0">Browser</div>
<svg style="position:absolute;left:330.0px;top:202.0px" width="32" height="14"><rect x="0.5" y="0.5" width="13" height="13" rx="2" fill="none" stroke="#666"/><rect x="3.5" y="5.5" width="5" height="5" fill="none" stroke="#666"/><path d="M5.5 5.5v-2h5v5h-2" fill="none" stroke="#666"/><rect x="17.5" y="0.5" width="13" height="13" rx="2" fill="none" stroke="#666"/><path d="M20.5 3.5l7 7M27.5 3.5l-7 7" stroke="#555" stroke-width="2.2"/></svg>
<svg style="position:absolute;left:5.71px;top:229.37px;overflow:visible" width="18.88" height="20.05" viewBox="0 0 32 32" preserveAspectRatio="none"><rect x="2" y="2" width="22" height="22" fill="#f4f4f4" stroke="#888" stroke-width="1.5"/><rect x="19" y="19" width="12" height="12" rx="2" fill="#5a9e5a"/><path d="M25.0 21.5V28.5M21.5 25.0H28.5" stroke="#fff" stroke-width="2"/></svg>
<svg style="position:absolute;left:34.03px;top:228.66px;overflow:visible" width="23.73" height="21.49" viewBox="0 0 32 32" preserveAspectRatio="none"><path d="M4 13C6 5 18 1 25 8l3-3v10H18l3.5-3.5C17 7 10 8 8 13z" fill="#3e7cc4" stroke="#2a5a92" stroke-width="0.6"/><path d="M28 19C26 27 14 31 7 24l-3 3V17h10l-3.5 3.5C15 25 22 24 24 19z" fill="#3e7cc4" stroke="#2a5a92" stroke-width="0.6"/></svg>
<svg style="position:absolute;left:68.32px;top:228.11px;overflow:visible" width="18.86" height="22.29" viewBox="0 0 32 32" preserveAspectRatio="none"><path d="M2 3h28l-10 12v15l-8-4V15z" fill="#5b8fcb" stroke="#2f5f94" stroke-width="1"/><rect x="3" y="2" width="26" height="4" fill="#f6e33c"/></svg>
<svg style="position:absolute;left:98.72px;top:226.89px;overflow:visible" width="20.41" height="22.52" viewBox="0 0 32 32" preserveAspectRatio="none"><path d="M2 4h22M2 4v26M2 30h6" stroke="#bbb" stroke-width="1.5" fill="none"/><rect x="5" y="12" width="5" height="5" fill="#f29d34"/><rect x="5" y="23" width="5" height="5" fill="#f29d34"/><path d="M20 30V14h-7l9-11 9 11h-7v16z" fill="#5b8fcb" stroke="#2f5f94"/></svg>
<svg style="position:absolute;left:130.62px;top:229.31px;overflow:visible" width="18.86" height="19.09" viewBox="0 0 32 32" preserveAspectRatio="none"><circle cx="16" cy="16" r="14" fill="#6a9ad1" stroke="#2d5580" stroke-width="1.2"/><text x="10.5" y="25" font-family="Liberation Serif" font-style="italic" font-weight="bold" font-size="21" fill="#fff">i</text></svg>
<div style="position:absolute;left:0px;top:259px;width:362px;height:331px;background:#fff;border-top:1px solid #adadad;border-right:1px solid #adadad;box-sizing:border-box"></div>
<div style="position:absolute;left:48.00px;top:265.30px;font:normal 15px/15px 'Liberation Sans',sans-serif;color:#000;white-space:pre;transform:scaleX(0.9510);transform-origin:0 0">Favorieten</div>
<div style="position:absolute;left:48.00px;top:287.80px;font:normal 15px/15px 'Liberation Sans',sans-serif;color:#000;white-space:pre;transform:scaleX(0.9667);transform-origin:0 0">Favoriete plaatsen</div>
<div style="position:absolute;left:48.00px;top:310.30px;font:normal 15px/15px 'Liberation Sans',sans-serif;color:#000;white-space:pre;transform:scaleX(0.9921);transform-origin:0 0">Home</div>
<div style="position:absolute;left:48.00px;top:332.80px;font:normal 15px/15px 'Liberation Sans',sans-serif;color:#000;white-space:pre;transform:scaleX(0.9821);transform-origin:0 0">C:\ (Windows)</div>
<div style="position:absolute;left:48.00px;top:355.30px;font:normal 15px/15px 'Liberation Sans',sans-serif;color:#000;white-space:pre;transform:scaleX(0.9267);transform-origin:0 0">S:\</div>
<div style="position:absolute;left:48.00px;top:377.80px;font:normal 15px/15px 'Liberation Sans',sans-serif;color:#000;white-space:pre;transform:scaleX(0.9339);transform-origin:0 0">GeoPackage</div>
<div style="position:absolute;left:48.00px;top:400.30px;font:normal 15px/15px 'Liberation Sans',sans-serif;color:#000;white-space:pre;transform:scaleX(0.9742);transform-origin:0 0">SpatiaLite</div>
<div style="position:absolute;left:48.00px;top:422.80px;font:normal 15px/15px 'Liberation Sans',sans-serif;color:#000;white-space:pre;transform:scaleX(0.9300);transform-origin:0 0">PostgreSQL</div>
<div style="position:absolute;left:48.00px;top:445.30px;font:normal 15px/15px 'Liberation Sans',sans-serif;color:#000;white-space:pre;transform:scaleX(0.9392);transform-origin:0 0">SAP HANA</div>
<div style="position:absolute;left:48.00px;top:467.80px;font:normal 15px/15px 'Liberation Sans',sans-serif;color:#000;white-space:pre;transform:scaleX(0.9284);transform-origin:0 0">MS SQL Server</div>
<div style="position:absolute;left:48.00px;top:490.30px;font:normal 15px/15px 'Liberation Sans',sans-serif;color:#000;white-space:pre;transform:scaleX(0.9505);transform-origin:0 0">Oracle</div>
<div style="position:absolute;left:48.00px;top:512.80px;font:normal 15px/15px 'Liberation Sans',sans-serif;color:#000;white-space:pre;transform:scaleX(0.9693);transform-origin:0 0">WMS/WMTS</div>
<div style="position:absolute;left:48.00px;top:535.30px;font:normal 15px/15px 'Liberation Sans',sans-serif;color:#000;white-space:pre;transform:scaleX(0.9191);transform-origin:0 0">Scenes</div>
<div style="position:absolute;left:48.00px;top:557.80px;font:normal 15px/15px 'Liberation Sans',sans-serif;color:#000;white-space:pre;transform:scaleX(0.9801);transform-origin:0 0">Vector Tiles</div>
<div style="position:absolute;left:48.00px;top:580.30px;font:normal 15px/15px 'Liberation Sans',sans-serif;color:#000;white-space:pre;transform:scaleX(0.9192);transform-origin:0 0">XYZ Tiles</div>
<svg style="position:absolute;left:2px;top:289.3px" width="10" height="12"><path d="M3 1.5l5 4.5-5 4.5z" fill="#555"/></svg>
<svg style="position:absolute;left:2px;top:311.8px" width="10" height="12"><path d="M3 1.5l5 4.5-5 4.5z" fill="#555"/></svg>
<svg style="position:absolute;left:2px;top:334.3px" width="10" height="12"><path d="M3 1.5l5 4.5-5 4.5z" fill="#555"/></svg>
<svg style="position:absolute;left:2px;top:356.8px" width="10" height="12"><path d="M3 1.5l5 4.5-5 4.5z" fill="#555"/></svg>
<svg style="position:absolute;left:2px;top:581.8px" width="10" height="12"><path d="M3 1.5l5 4.5-5 4.5z" fill="#555"/></svg>
<svg style="position:absolute;left:18.57px;top:261.37px;overflow:visible" width="22.86" height="22.86" viewBox="0 0 32 32" preserveAspectRatio="none"><polygon points="16.0,2.0 19.5,11.1 29.3,11.7 21.7,17.9 24.2,27.3 16.0,22.0 7.8,27.3 10.3,17.9 2.7,11.7 12.5,11.1" fill="#fde65a" stroke="#d4b21c" stroke-width="1.5"/></svg>
<svg style="position:absolute;left:19.64px;top:284.44px;overflow:visible" width="21.76" height="21.71" viewBox="0 0 32 32" preserveAspectRatio="none"><path d="M6 3h20v26H6z" fill="#eaeaea" stroke="#999"/><path d="M2 5a3 3 0 0 1 6 0v22a3 3 0 0 0-6 0z" fill="#f5f5f5" stroke="#999"/><path d="M17 2h6v11l-3-3-3 3z" fill="#5b8fcb" stroke="#2f5f94"/></svg>
<svg style="position:absolute;left:19.79px;top:306.60px;overflow:visible" width="19.43" height="20.48" viewBox="0 0 32 32" preserveAspectRatio="none"><path d="M2 6h9l3 3h16v21H2z" fill="#f0f0f0" stroke="#777" stroke-width="1.6"/><path d="M10 20l6-6 6 6M12 19v6h8v-6" fill="none" stroke="#333" stroke-width="1.6"/></svg>
<svg style="position:absolute;left:19.79px;top:329.10px;overflow:visible" width="19.43" height="20.48" viewBox="0 0 32 32" preserveAspectRatio="none"><path d="M2 6h9l3 3h16v21H2z" fill="#f0f0f0" stroke="#777" stroke-width="1.6"/></svg>
<svg style="position:absolute;left:19.79px;top:351.60px;overflow:visible" width="19.43" height="20.48" viewBox="0 0 32 32" preserveAspectRatio="none"><path d="M2 6h9l3 3h16v21H2z" fill="#f0f0f0" stroke="#777" stroke-width="1.6"/></svg>
<svg style="position:absolute;left:18.57px;top:373.92px;overflow:visible" width="22.86" height="22.07" viewBox="0 0 32 32" preserveAspectRatio="none"><path d="M2 14l10-4 18 4v12l-18 5-10-4z" fill="#e8c21a" stroke="#111" stroke-width="1"/><path d="M12 19v12M2 14l10 5 18-5" fill="none" stroke="#111" stroke-width="1"/><path d="M12 19l18-5v12l-18 5z" fill="#f7e66a"/><circle cx="16" cy="11" r="9" fill="#8fb3dd" stroke="#2f5f94" stroke-width="0.8"/><path d="M10 8c2-2 5 0 6 1s2 3 0 4-3 2-5 0zM17 5c2 0 4 2 5 3s-1 3-2 2z" fill="#2f5f94"/><path d="M2 14l10 5 18-5" fill="none" stroke="#111" stroke-width="1.2"/></svg>
<svg style="position:absolute;left:18.59px;top:396.42px;overflow:visible" width="22.52" height="22.07" viewBox="0 0 32 32" preserveAspectRatio="none"><path d="M2 31C6 20 14 8 29 2c-1 8-5 16-11 20-4 3-9 4-13 5z" fill="#7ba3d2" stroke="#3c6aa0" stroke-width="1"/></svg>
<svg style="position:absolute;left:17.78px;top:418.92px;overflow:visible" width="23.70" height="22.07" viewBox="0 0 32 32" preserveAspectRatio="none"><path d="M4 10c0-8 10-9 14-6 4-3 11-1 11 6 0 6-3 9-5 10v8c-2 2-4 1-4-2v-4c-2 1-4 1-6 0v8c-2 2-5 1-5-2v-9c-3-2-5-5-5-9z" fill="#5b8fcb" stroke="#2f5f94" stroke-width="1.4"/></svg>
<svg style="position:absolute;left:20.40px;top:443.20px;overflow:visible" width="19.20" height="19.20" viewBox="0 0 32 32" preserveAspectRatio="none"><rect x="4" y="4" width="24" height="24" fill="#5b8fcb"/><rect x="2" y="2" width="28" height="28" fill="none" stroke="#2f5f94" stroke-width="2" stroke-dasharray="2 2"/></svg>
<svg style="position:absolute;left:18.57px;top:463.87px;overflow:visible" width="22.86" height="22.86" viewBox="0 0 32 32" preserveAspectRatio="none"><path d="M2 2c10 2 22 6 28 14-6 8-18 12-28 14 4-8 4-20 0-28z" fill="#5b8fcb" stroke="#2f5f94" stroke-width="1.2"/><path d="M8 5c3 6 3 16 0 22M15 8c2 5 2 11 0 16" stroke="#2f5f94" fill="none"/></svg>
<svg style="position:absolute;left:19.33px;top:487.62px;overflow:visible" width="21.33" height="20.36" viewBox="0 0 32 32" preserveAspectRatio="none"><rect x="2" y="6" width="28" height="20" rx="9" fill="#5b8fcb" stroke="#2f5f94" stroke-width="2"/></svg>
<svg style="position:absolute;left:18.57px;top:508.87px;overflow:visible" width="22.86" height="22.86" viewBox="0 0 32 32" preserveAspectRatio="none"><circle cx="16" cy="16" r="14" fill="#7ba3d2" stroke="#2f5f94" stroke-width="1"/><path d="M8 9c3-2 6 0 7 2s-1 5-3 6-4 4-3 7c-3-3-4-7-1-15zM18 6c4 0 8 3 9 6l-4 2c-2-1-3-3-5-3z M20 18c2 0 4 2 3 5l-3 3c-1-3-2-5 0-8z" fill="#2f5f94"/></svg>
<svg style="position:absolute;left:19.71px;top:531.37px;overflow:visible" width="20.57" height="22.86" viewBox="0 0 32 32" preserveAspectRatio="none"><path d="M16 2l13 6v16l-13 6-13-6V8z" fill="#b8d0ec" stroke="#2f5f94" stroke-width="1.4"/><path d="M3 8l13 6 13-6M16 14v16" fill="none" stroke="#2f5f94" stroke-width="1.4"/><path d="M3 8l13 6v16l-13-6z" fill="#d6e4f4"/></svg>
<svg style="position:absolute;left:20.37px;top:555.17px;overflow:visible" width="20.27" height="20.27" viewBox="0 0 32 32" preserveAspectRatio="none"><rect x="2" y="2" width="28" height="28" fill="#fff" stroke="#2c3e50" stroke-width="2"/><path d="M11 2v28M21 2v28M2 11h28M2 21h28" stroke="#2c3e50" stroke-width="2"/></svg>
<svg style="position:absolute;left:19.64px;top:576.94px;overflow:visible" width="21.71" height="21.71" viewBox="0 0 32 32" preserveAspectRatio="none"><rect x="2" y="2" width="8" height="8" fill="#5b8fcb"/><rect x="12" y="2" width="8" height="8" fill="#5b8fcb"/><rect x="22" y="2" width="8" height="8" fill="#5b8fcb"/><rect x="2" y="12" width="8" height="8" fill="#5b8fcb"/><rect x="12" y="12" width="8" height="8" fill="#5b8fcb"/><rect x="22" y="12" width="8" height="8" fill="#5b8fcb"/></svg>
<div style="position:absolute;left:343px;top:260px;width:18px;height:329px;background:#fff;border-left:1px solid #f0f0f0"></div>
<div style="position:absolute;left:344px;top:504.8px;width:16px;height:66.4px;background:#dcdcdc;border:1px solid #cfcfcf;box-sizing:border-box"></div>
<svg style="position:absolute;left:344px;top:262px" width="16" height="14" viewBox="0 0 16 14"><path d="M3 9l5-5 5 5z" fill="#606060"/></svg>
<svg style="position:absolute;left:344px;top:573px" width="16" height="14" viewBox="0 0 16 14"><path d="M3 5l5 5 5-5z" fill="#606060"/></svg>
<div style="position:absolute;left:0px;top:589px;width:362px;height:1px;background:#adadad"></div>
<div style="position:absolute;left:0px;top:590px;width:370px;height:10px;background:#f0f0f0"></div>
<svg style="position:absolute;left:168px;top:591px" width="24" height="4" viewBox="0 0 24 4"><rect x="2.0" y="1.5" width="1" height="1" fill="#a0a0a0"/><rect x="5.3" y="1.5" width="1" height="1" fill="#a0a0a0"/><rect x="8.6" y="1.5" width="1" height="1" fill="#a0a0a0"/><rect x="11.9" y="1.5" width="1" height="1" fill="#a0a0a0"/><rect x="15.2" y="1.5" width="1" height="1" fill="#a0a0a0"/><rect x="18.5" y="1.5" width="1" height="1" fill="#a0a0a0"/><rect x="21.8" y="1.5" width="1" height="1" fill="#a0a0a0"/></svg>
<svg style="position:absolute;left:365px;top:585px" width="4" height="30" viewBox="0 0 4 30"><rect x="1.5" y="2.0" width="1" height="1" fill="#a0a0a0"/><rect x="1.5" y="5.3" width="1" height="1" fill="#a0a0a0"/><rect x="1.5" y="8.6" width="1" height="1" fill="#a0a0a0"/><rect x="1.5" y="11.9" width="1" height="1" fill="#a0a0a0"/><rect x="1.5" y="15.2" width="1" height="1" fill="#a0a0a0"/><rect x="1.5" y="18.5" width="1" height="1" fill="#a0a0a0"/><rect x="1.5" y="21.8" width="1" height="1" fill="#a0a0a0"/><rect x="1.5" y="25.1" width="1" height="1" fill="#a0a0a0"/></svg>
<div style="position:absolute;left:0.00px;top:603.30px;font:normal 15px/15px 'Liberation Sans',sans-serif;color:#000;white-space:pre;transform:scaleX(0.9492);transform-origin:0 0">Lagen</div>
<svg style="position:absolute;left:329.4px;top:603.5px" width="32" height="14"><rect x="0.5" y="0.5" width="13" height="13" rx="2" fill="none" stroke="#666"/><rect x="3.5" y="5.5" width="5" height="5" fill="none" stroke="#666"/><path d="M5.5 5.5v-2h5v5h-2" fill="none" stroke="#666"/><rect x="17.5" y="0.5" width="13" height="13" rx="2" fill="none" stroke="#666"/><path d="M20.5 3.5l7 7M27.5 3.5l-7 7" stroke="#555" stroke-width="2.2"/></svg>
<svg style="position:absolute;left:5.17px;top:636.03px;overflow:visible" width="20.08" height="20.31" viewBox="0 0 32 32" preserveAspectRatio="none"><path d="M2 18l12-8 10 8-12 10z" fill="#5b8fcb"/><path d="M2 18l12-8 5 4-12 9z" fill="#f0c53a"/><path d="M2 18l5 5 -2 3z" fill="#e04040"/><path d="M10 22l8-6 3 3-8 6z" fill="#d8a460"/><path d="M18 16l11-13" stroke="#d8a040" stroke-width="3.5" stroke-linecap="round"/></svg>
<svg style="position:absolute;left:35.44px;top:631.86px;overflow:visible" width="20.19" height="22.86" viewBox="0 0 32 32" preserveAspectRatio="none"><rect x="2" y="8" width="14" height="20" fill="#f0f0f0" stroke="#888" stroke-width="1.3"/><rect x="6" y="4" width="14" height="20" fill="#f0f0f0" stroke="#888" stroke-width="1.3"/><path d="M11 3v11a2.5 2.5 0 0 0 5 0V6" fill="none" stroke="#5b8fcb" stroke-width="1.6"/><rect x="19" y="19" width="12" height="12" rx="2" fill="#5a9e5a"/><path d="M25.0 21.5V28.5M21.5 25.0H28.5" stroke="#fff" stroke-width="2"/></svg>
<svg style="position:absolute;left:72.02px;top:633.89px;overflow:visible" width="22.06" height="21.89" viewBox="0 0 32 32" preserveAspectRatio="none"><path d="M2 16q14-14 28 0q-14 14-28 0z" fill="#fff" stroke="#999" stroke-width="1.3"/><circle cx="16" cy="15" r="5.5" fill="#5b8fcb" stroke="#2f5f94"/><circle cx="16" cy="15" r="2" fill="#222"/></svg>
<svg style="position:absolute;left:91.0px;top:655.0px" width="10" height="6"><path d="M0.5 0.5h9l-4.5 4.8z" fill="#555"/></svg>
<svg style="position:absolute;left:113.69px;top:633.07px;overflow:visible" width="20.91" height="22.86" viewBox="0 0 32 32" preserveAspectRatio="none"><path d="M2 3h28l-10 12v15l-8-4V15z" fill="#5b8fcb" stroke="#2f5f94" stroke-width="1"/><rect x="3" y="2" width="26" height="4" fill="#f6e33c"/></svg>
<svg style="position:absolute;left:132.2px;top:655.0px" width="10" height="6"><path d="M0.5 0.5h9l-4.5 4.8z" fill="#555"/></svg>
<svg style="position:absolute;left:155.08px;top:633.08px;overflow:visible" width="22.77" height="23.38" viewBox="0 0 32 32" preserveAspectRatio="none"><text x="2" y="18" font-family="Liberation Serif" font-size="20" fill="#ccc">ε</text><rect x="14" y="17" width="14" height="13" fill="#e2e2e2" stroke="#d0d0d0"/></svg>
<svg style="position:absolute;left:187.2px;top:642.0px" width="10" height="6"><path d="M0.5 0.5h9l-4.5 4.8z" fill="#a8a8a8"/></svg>
<svg style="position:absolute;left:205.27px;top:634.11px;overflow:visible" width="22.87" height="20.15" viewBox="0 0 32 32" preserveAspectRatio="none"><path d="M2 4h10M2 4v26M2 30h6" stroke="#bbb" stroke-width="1.5" fill="none"/><rect x="5" y="10" width="5" height="5" fill="#f29d34"/><rect x="5" y="21" width="5" height="5" fill="#f29d34"/><path d="M18 3v16h-7l9 11 9-11h-7V3z" fill="#5b8fcb" stroke="#2f5f94"/></svg>
<svg style="position:absolute;left:237.26px;top:633.06px;overflow:visible" width="21.41" height="20.74" viewBox="0 0 32 32" preserveAspectRatio="none"><path d="M2 4h22M2 4v26M2 30h6" stroke="#bbb" stroke-width="1.5" fill="none"/><rect x="5" y="12" width="5" height="5" fill="#f29d34"/><rect x="5" y="23" width="5" height="5" fill="#f29d34"/><path d="M20 30V14h-7l9-11 9 11h-7v16z" fill="#5b8fcb" stroke="#2f5f94"/></svg>
<svg style="position:absolute;left:268.89px;top:635.37px;overflow:visible" width="19.63" height="20.27" viewBox="0 0 32 32" preserveAspectRatio="none"><rect x="2" y="2" width="22" height="22" fill="#f4f4f4" stroke="#888" stroke-width="1.5"/><rect x="19" y="21" width="12" height="9" rx="4" fill="#e04848"/><path d="M22 25.5h6" stroke="#fff" stroke-width="1.8"/></svg>
<div style="position:absolute;left:0px;top:670px;width:362px;height:320px;background:#fff;border-top:1px solid #adadad;border-right:1px solid #adadad;box-sizing:border-box"></div>
<div style="position:absolute;left:0px;top:671px;width:361px;height:23.5px;background:#f0f0f0"></div>
<svg style="position:absolute;left:2px;top:677px" width="14" height="10" viewBox="0 0 14 10"><path d="M2 2.5h10l-5 5z" fill="#555"/></svg>
<svg style="position:absolute;left:24px;top:673px" width="20" height="19" viewBox="0 0 20 19"><rect x="1.5" y="1.5" width="16" height="16" fill="#fff" stroke="#8f8f8f"/><path d="M4.5 9.5l3.5 4.5l6-9" fill="none" stroke="#000" stroke-width="2"/></svg>
<svg style="position:absolute;left:52px;top:675px" width="18" height="17" viewBox="0 0 18 17"><rect x="0" y="0" width="17" height="17" fill="#9fc3e9"/><rect x="0" y="0" width="5.7" height="5.7" fill="#2b3a4e"/><rect x="11.3" y="0" width="5.7" height="5.7" fill="#2b3a4e"/><rect x="5.7" y="5.7" width="5.7" height="5.7" fill="#2b3a4e"/><rect x="0" y="11.3" width="5.7" height="5.7" fill="#2b3a4e"/><rect x="11.3" y="11.3" width="5.7" height="5.7" fill="#fff" opacity="0"/></svg>
<div style="position:absolute;left:77.70px;top:675.80px;font:bold 15px/15px 'Liberation Sans',sans-serif;color:#000;white-space:pre;transform:scaleX(0.9755);transform-origin:0 0"><u>Google Maps Grey</u></div>
<div style="position:absolute;left:370px;top:197px;width:1545px;height:793px;background:#fff;border-left:1px solid #a0a0a0;border-bottom:1px solid #a0a0a0;box-sizing:border-box"></div>
<svg style="position:absolute;left:0;top:0" width="1915" height="1027" viewBox="0 0 1915 1027">
<defs><clipPath id="mc"><rect x="425" y="198" width="1435" height="790"/></clipPath><clipPath id="lc"><path d="M646.0 197.0L648.7 198.3L653.9 205.4L659.2 214.6L664.4 221.1L672.2 228.9L676.1 234.2L678.7 242.0L682.7 251.1L687.9 257.7L694.4 262.9L699.6 269.4L705.5 276.6L704.2 277.8L704.9 273.3L699.6 265.5L693.1 257.7L687.9 249.8L684.6 240.7L684.0 238.1L690.5 239.4L693.1 247.2L700.9 256.4L708.8 262.9L715.3 268.1L719.2 276.0L721.2 286.4L727.1 294.2L744.0 303.4L757.1 306.0L770.1 308.6L780.6 313.8L789.7 320.1L802.9 330.8L813.4 339.1L821.7 341.2L834.3 339.1L836.0 336.5L823.8 333.9L813.4 330.8L809.2 320.3L810.6 311.2L802.8 308.6L791.1 302.5L795.4 293.7L795.4 282.7L782.3 287.1L777.9 298.1L773.5 298.1L760.4 295.9L753.8 287.1L754.5 285.1L753.2 273.3L754.5 262.9L758.4 253.7L767.5 247.2L779.3 247.2L789.7 244.6L805.4 244.6L810.6 245.9L815.8 252.4L819.7 260.3L821.7 266.8L823.7 262.9L823.7 252.4L827.6 236.8L834.1 226.3L840.6 217.2L841.9 208.1L847.2 198.3L849.8 195.0Z"/><path d="M805.0 280.6L817.5 277.5L828.0 280.6L840.5 286.9L846.8 290.0L838.4 290.7L828.0 288.0L813.4 281.7Z"/><path d="M848.9 287.3L861.4 286.9L867.7 293.2L857.2 297.3L846.8 296.3Z"/><path d="M829.0 296.9L838.4 296.9L837.4 298.6L830.1 298.6Z"/><path d="M872.9 296.7L880.2 297.1L879.8 298.6L872.9 298.4Z"/><path d="M829.0 268.1L832.2 270.2L833.2 274.4L831.1 273.3Z"/><path d="M834.3 338.7L843.6 329.4L856.1 323.1L857.7 332.5L871.7 329.4L893.5 332.5L909.1 338.7L924.7 348.1L937.2 357.4L943.4 369.9L955.9 376.1L974.6 382.3L993.3 388.6L1005.7 397.9L1004.2 413.5L990.1 422.9L987.0 444.7L980.8 457.2L959.0 469.6L946.5 482.1L943.4 497.7L930.9 510.1L915.3 519.5L906.0 525.7L909.1 535.1L893.5 538.2L884.2 550.7L881.0 563.1L874.8 572.5L868.6 585.0L874.8 597.4L868.6 609.9L874.8 622.4L881.0 634.8L868.6 636.4L856.1 628.6L846.8 613.0L843.6 594.3L848.3 569.4L849.9 538.2L856.1 507.0L860.8 475.9L862.3 450.9L859.2 438.5L840.5 426.0L829.6 413.5L818.7 391.7L820.3 382.3L828.1 366.8L831.2 354.3Z"/><path d="M899.8 613.0L909.1 611.5L910.7 616.1L901.3 616.8Z"/><path d="M1104.3 198.0L1613.8 198.0L1611.6 203.9L1617.4 210.4L1622.4 209.7L1630.4 211.1L1623.9 214.7L1618.8 220.5L1617.4 223.4L1622.4 226.3L1626.0 232.0L1628.2 237.8L1628.9 246.4L1626.8 253.6L1622.4 259.4L1617.4 265.2L1616.7 265.5L1608.6 272.3L1599.0 277.7L1589.5 281.8L1581.3 285.2L1574.5 283.2L1566.3 285.2L1563.6 290.0L1566.3 295.4L1571.8 302.2L1577.2 310.4L1577.9 318.6L1574.5 325.4L1567.7 330.9L1560.9 337.7L1558.1 336.3L1559.5 326.8L1552.7 324.1L1547.2 321.3L1543.2 318.6L1537.7 317.2L1535.0 321.3L1535.7 330.9L1537.7 340.4L1541.1 347.2L1545.9 352.7L1550.6 358.1L1554.1 365.6L1557.5 366.3L1555.4 359.5L1551.3 351.3L1545.9 347.2L1540.4 341.8L1537.7 333.6L1536.3 324.1L1533.6 314.5L1530.9 307.7L1524.1 300.9L1517.3 296.8L1511.8 290.0L1509.1 283.2L1505.0 277.7L1498.2 275.0L1498.3 276.8L1491.0 282.6L1485.2 288.5L1476.4 295.8L1467.6 303.1L1461.8 310.4L1460.3 322.1L1457.4 332.3L1450.1 337.4L1445.7 330.8L1439.9 319.2L1435.5 306.0L1431.1 294.3L1428.2 285.6L1419.4 281.2L1422.4 276.8L1416.5 273.9L1401.9 269.5L1388.7 269.5L1377.7 267.3L1371.1 262.9L1367.7 260.4L1358.1 259.1L1348.6 253.6L1340.4 245.5L1336.3 242.7L1335.0 246.8L1340.4 256.4L1344.5 264.5L1347.2 271.4L1352.7 272.7L1362.2 271.4L1366.3 264.5L1369.1 268.6L1375.9 275.4L1380.0 280.9L1374.5 290.4L1369.1 295.9L1358.1 301.3L1347.2 306.8L1336.3 312.2L1324.1 316.3L1314.5 313.6L1314.5 324.5L1320.0 329.3L1330.9 325.9L1344.5 324.5L1346.6 325.2L1343.2 335.4L1336.3 347.7L1328.2 357.2L1318.6 368.1L1310.4 377.7L1299.5 389.0L1301.8 405.4L1303.1 413.6L1303.1 424.5L1301.8 435.4L1289.5 443.6L1280.0 451.8L1282.7 458.6L1282.7 468.2L1273.1 476.3L1271.8 484.5L1263.6 498.1L1252.7 511.8L1233.6 517.2L1220.0 518.6L1214.5 509.1L1211.8 495.4L1206.3 481.8L1202.3 465.4L1195.4 451.8L1189.3 439.5L1192.7 427.3L1195.4 413.6L1194.3 400.7L1184.9 382.0L1180.3 370.3L1180.3 354.0L1166.2 347.0L1149.9 347.0L1128.8 349.3L1107.8 351.6L1093.8 339.9L1082.1 325.9L1075.1 311.9L1077.4 295.5L1073.9 281.5L1075.1 265.1L1091.4 251.1L1101.0 245.3L1108.6 232.2L1115.2 224.5L1119.6 219.0L1117.4 215.2L1108.6 211.4L1104.3 207.0L1106.4 202.6L1104.3 198.0Z"/><path d="M1459.5 331.7L1465.3 337.6L1466.0 344.6L1461.3 344.6L1459.0 337.6Z"/><path d="M1640.4 197.0L1639.7 205.4L1647.6 210.4L1645.5 224.8L1651.3 223.4L1657.0 217.6L1657.7 210.4L1653.4 201.8L1649.8 197.0Z"/><path d="M1665.7 226.3L1676.5 220.5L1683.7 219.8L1690.9 214.0L1698.1 206.8L1702.4 197.0L1708.2 197.0L1705.3 206.8L1702.4 214.0L1701.0 220.5L1694.5 224.8L1683.7 228.4L1672.9 227.7L1666.4 227.7Z"/><path d="M1659.2 229.9L1666.4 228.4L1667.8 234.2L1665.0 240.0L1661.3 239.2L1660.6 233.5Z"/><path d="M1670.0 231.0L1678.0 226.5L1679.0 230.0L1671.0 234.0Z"/><path d="M1620.8 269.5L1627.6 268.2L1624.9 280.4L1621.5 279.1Z"/><path d="M1575.9 291.3L1584.0 290.0L1584.0 295.4L1578.6 296.8Z"/><path d="M1622.9 298.2L1629.0 296.8L1630.4 305.0L1627.6 314.5L1630.4 318.6L1626.3 320.0L1624.2 311.8L1622.2 303.6Z"/><path d="M1630.4 339.0L1639.9 333.6L1646.7 336.3L1645.4 344.5L1638.5 345.9L1631.7 343.1Z"/><path d="M1629.0 325.4L1639.9 324.1L1641.3 330.9L1631.7 332.2Z"/><path d="M1611.3 336.3L1619.5 326.8L1620.2 328.1L1612.7 338.0Z"/><path d="M1577.3 365.2L1586.1 358.6L1597.0 352.1L1605.8 345.5L1610.2 344.4L1616.8 349.9L1611.3 354.3L1612.4 361.9L1615.7 366.3L1610.2 370.7L1608.0 376.2L1601.4 386.1L1594.8 386.1L1587.2 382.8L1580.6 377.3L1577.3 371.8Z"/><path d="M1522.7 350.0L1530.9 354.0L1540.0 359.7L1546.6 365.2L1555.4 372.9L1561.9 377.3L1566.3 381.7L1564.1 393.7L1560.8 393.7L1553.2 383.9L1546.6 375.1L1540.0 368.5L1532.2 362.2L1524.1 354.0Z"/><path d="M1563.0 395.9L1572.9 397.0L1586.1 398.1L1595.9 401.4L1601.4 405.8L1594.8 405.8L1583.9 402.5L1570.7 400.3L1564.1 398.1Z"/><path d="M1636.5 408.5L1648.6 405.2L1647.5 407.1L1637.6 411.8Z"/><path d="M1605.8 404.7L1629.9 405.6L1629.4 407.1L1605.8 406.5Z"/><path d="M1650.8 364.1L1654.6 361.9L1655.1 370.7L1651.9 371.8Z"/><path d="M1645.3 383.9L1649.7 384.4L1649.7 386.1L1645.3 385.8L1654.0 383.3L1662.8 385.0L1662.8 386.6L1654.0 385.0Z"/><path d="M1620.1 369.6L1627.7 367.4L1640.9 365.2L1638.7 368.5L1629.9 369.6L1623.3 374.0L1632.1 375.1L1625.5 379.5L1631.0 389.3L1627.7 391.5L1623.3 385.0L1621.1 393.7L1619.0 393.7L1620.1 381.7Z"/><path d="M1662.8 375.1L1671.6 372.9L1678.2 377.3L1682.6 381.7L1693.5 379.5L1704.5 381.7L1715.5 387.2L1724.2 394.8L1730.8 402.5L1741.8 410.2L1742.9 414.6L1726.4 410.2L1715.5 408.0L1704.5 408.0L1695.7 403.6L1691.3 397.0L1682.6 390.4L1673.8 386.1L1668.3 381.7L1663.9 378.4Z"/><path d="M1339.9 421.7L1343.1 433.5L1339.0 447.0L1335.6 459.2L1331.0 468.0L1327.0 474.2L1320.5 475.0L1317.4 465.0L1317.4 448.5L1322.7 439.9L1331.3 432.0L1337.0 426.0Z"/><path d="M1595.0 461.8L1597.4 457.1L1613.7 452.4L1630.1 440.7L1648.8 429.1L1658.1 431.4L1662.8 422.1L1681.5 419.7L1686.2 426.7L1695.5 436.1L1704.9 438.4L1709.5 422.1L1711.9 417.4L1718.9 431.4L1723.6 445.4L1737.6 457.1L1746.9 464.1L1746.9 517.9L1742.2 520.2L1732.9 534.2L1714.2 538.9L1702.5 534.2L1697.9 524.9L1690.8 520.2L1686.2 513.2L1676.8 506.2L1660.5 503.8L1641.8 510.8L1623.1 515.5L1611.4 520.2L1602.1 515.5L1600.9 496.8L1595.0 480.5Z"/><path d="M1718.9 550.6L1732.9 550.6L1730.6 562.2L1723.6 564.6Z"/><path d="M1832.2 520.2L1839.2 529.5L1852.5 534.7L1848.6 542.4L1841.5 544.7L1836.9 552.9L1828.7 555.7L1833.4 545.9L1836.9 536.5Z"/></clipPath></defs>
<g clip-path="url(#mc)">
<rect x="425" y="198" width="1435" height="790" fill="#68cfe5"/>
<path d="M646.0 197.0L648.7 198.3L653.9 205.4L659.2 214.6L664.4 221.1L672.2 228.9L676.1 234.2L678.7 242.0L682.7 251.1L687.9 257.7L694.4 262.9L699.6 269.4L705.5 276.6L704.2 277.8L704.9 273.3L699.6 265.5L693.1 257.7L687.9 249.8L684.6 240.7L684.0 238.1L690.5 239.4L693.1 247.2L700.9 256.4L708.8 262.9L715.3 268.1L719.2 276.0L721.2 286.4L727.1 294.2L744.0 303.4L757.1 306.0L770.1 308.6L780.6 313.8L789.7 320.1L802.9 330.8L813.4 339.1L821.7 341.2L834.3 339.1L836.0 336.5L823.8 333.9L813.4 330.8L809.2 320.3L810.6 311.2L802.8 308.6L791.1 302.5L795.4 293.7L795.4 282.7L782.3 287.1L777.9 298.1L773.5 298.1L760.4 295.9L753.8 287.1L754.5 285.1L753.2 273.3L754.5 262.9L758.4 253.7L767.5 247.2L779.3 247.2L789.7 244.6L805.4 244.6L810.6 245.9L815.8 252.4L819.7 260.3L821.7 266.8L823.7 262.9L823.7 252.4L827.6 236.8L834.1 226.3L840.6 217.2L841.9 208.1L847.2 198.3L849.8 195.0Z" fill="#f9f7f3"/><path d="M805.0 280.6L817.5 277.5L828.0 280.6L840.5 286.9L846.8 290.0L838.4 290.7L828.0 288.0L813.4 281.7Z" fill="#f9f7f3"/><path d="M848.9 287.3L861.4 286.9L867.7 293.2L857.2 297.3L846.8 296.3Z" fill="#f9f7f3"/><path d="M829.0 296.9L838.4 296.9L837.4 298.6L830.1 298.6Z" fill="#f9f7f3"/><path d="M872.9 296.7L880.2 297.1L879.8 298.6L872.9 298.4Z" fill="#f9f7f3"/><path d="M829.0 268.1L832.2 270.2L833.2 274.4L831.1 273.3Z" fill="#f9f7f3"/><path d="M834.3 338.7L843.6 329.4L856.1 323.1L857.7 332.5L871.7 329.4L893.5 332.5L909.1 338.7L924.7 348.1L937.2 357.4L943.4 369.9L955.9 376.1L974.6 382.3L993.3 388.6L1005.7 397.9L1004.2 413.5L990.1 422.9L987.0 444.7L980.8 457.2L959.0 469.6L946.5 482.1L943.4 497.7L930.9 510.1L915.3 519.5L906.0 525.7L909.1 535.1L893.5 538.2L884.2 550.7L881.0 563.1L874.8 572.5L868.6 585.0L874.8 597.4L868.6 609.9L874.8 622.4L881.0 634.8L868.6 636.4L856.1 628.6L846.8 613.0L843.6 594.3L848.3 569.4L849.9 538.2L856.1 507.0L860.8 475.9L862.3 450.9L859.2 438.5L840.5 426.0L829.6 413.5L818.7 391.7L820.3 382.3L828.1 366.8L831.2 354.3Z" fill="#f9f7f3"/><path d="M899.8 613.0L909.1 611.5L910.7 616.1L901.3 616.8Z" fill="#f9f7f3"/><path d="M1104.3 198.0L1613.8 198.0L1611.6 203.9L1617.4 210.4L1622.4 209.7L1630.4 211.1L1623.9 214.7L1618.8 220.5L1617.4 223.4L1622.4 226.3L1626.0 232.0L1628.2 237.8L1628.9 246.4L1626.8 253.6L1622.4 259.4L1617.4 265.2L1616.7 265.5L1608.6 272.3L1599.0 277.7L1589.5 281.8L1581.3 285.2L1574.5 283.2L1566.3 285.2L1563.6 290.0L1566.3 295.4L1571.8 302.2L1577.2 310.4L1577.9 318.6L1574.5 325.4L1567.7 330.9L1560.9 337.7L1558.1 336.3L1559.5 326.8L1552.7 324.1L1547.2 321.3L1543.2 318.6L1537.7 317.2L1535.0 321.3L1535.7 330.9L1537.7 340.4L1541.1 347.2L1545.9 352.7L1550.6 358.1L1554.1 365.6L1557.5 366.3L1555.4 359.5L1551.3 351.3L1545.9 347.2L1540.4 341.8L1537.7 333.6L1536.3 324.1L1533.6 314.5L1530.9 307.7L1524.1 300.9L1517.3 296.8L1511.8 290.0L1509.1 283.2L1505.0 277.7L1498.2 275.0L1498.3 276.8L1491.0 282.6L1485.2 288.5L1476.4 295.8L1467.6 303.1L1461.8 310.4L1460.3 322.1L1457.4 332.3L1450.1 337.4L1445.7 330.8L1439.9 319.2L1435.5 306.0L1431.1 294.3L1428.2 285.6L1419.4 281.2L1422.4 276.8L1416.5 273.9L1401.9 269.5L1388.7 269.5L1377.7 267.3L1371.1 262.9L1367.7 260.4L1358.1 259.1L1348.6 253.6L1340.4 245.5L1336.3 242.7L1335.0 246.8L1340.4 256.4L1344.5 264.5L1347.2 271.4L1352.7 272.7L1362.2 271.4L1366.3 264.5L1369.1 268.6L1375.9 275.4L1380.0 280.9L1374.5 290.4L1369.1 295.9L1358.1 301.3L1347.2 306.8L1336.3 312.2L1324.1 316.3L1314.5 313.6L1314.5 324.5L1320.0 329.3L1330.9 325.9L1344.5 324.5L1346.6 325.2L1343.2 335.4L1336.3 347.7L1328.2 357.2L1318.6 368.1L1310.4 377.7L1299.5 389.0L1301.8 405.4L1303.1 413.6L1303.1 424.5L1301.8 435.4L1289.5 443.6L1280.0 451.8L1282.7 458.6L1282.7 468.2L1273.1 476.3L1271.8 484.5L1263.6 498.1L1252.7 511.8L1233.6 517.2L1220.0 518.6L1214.5 509.1L1211.8 495.4L1206.3 481.8L1202.3 465.4L1195.4 451.8L1189.3 439.5L1192.7 427.3L1195.4 413.6L1194.3 400.7L1184.9 382.0L1180.3 370.3L1180.3 354.0L1166.2 347.0L1149.9 347.0L1128.8 349.3L1107.8 351.6L1093.8 339.9L1082.1 325.9L1075.1 311.9L1077.4 295.5L1073.9 281.5L1075.1 265.1L1091.4 251.1L1101.0 245.3L1108.6 232.2L1115.2 224.5L1119.6 219.0L1117.4 215.2L1108.6 211.4L1104.3 207.0L1106.4 202.6L1104.3 198.0Z" fill="#f9f7f3"/><path d="M1459.5 331.7L1465.3 337.6L1466.0 344.6L1461.3 344.6L1459.0 337.6Z" fill="#f9f7f3"/><path d="M1640.4 197.0L1639.7 205.4L1647.6 210.4L1645.5 224.8L1651.3 223.4L1657.0 217.6L1657.7 210.4L1653.4 201.8L1649.8 197.0Z" fill="#f9f7f3"/><path d="M1665.7 226.3L1676.5 220.5L1683.7 219.8L1690.9 214.0L1698.1 206.8L1702.4 197.0L1708.2 197.0L1705.3 206.8L1702.4 214.0L1701.0 220.5L1694.5 224.8L1683.7 228.4L1672.9 227.7L1666.4 227.7Z" fill="#f9f7f3"/><path d="M1659.2 229.9L1666.4 228.4L1667.8 234.2L1665.0 240.0L1661.3 239.2L1660.6 233.5Z" fill="#f9f7f3"/><path d="M1670.0 231.0L1678.0 226.5L1679.0 230.0L1671.0 234.0Z" fill="#f9f7f3"/><path d="M1620.8 269.5L1627.6 268.2L1624.9 280.4L1621.5 279.1Z" fill="#f9f7f3"/><path d="M1575.9 291.3L1584.0 290.0L1584.0 295.4L1578.6 296.8Z" fill="#f9f7f3"/><path d="M1622.9 298.2L1629.0 296.8L1630.4 305.0L1627.6 314.5L1630.4 318.6L1626.3 320.0L1624.2 311.8L1622.2 303.6Z" fill="#f9f7f3"/><path d="M1630.4 339.0L1639.9 333.6L1646.7 336.3L1645.4 344.5L1638.5 345.9L1631.7 343.1Z" fill="#f9f7f3"/><path d="M1629.0 325.4L1639.9 324.1L1641.3 330.9L1631.7 332.2Z" fill="#f9f7f3"/><path d="M1611.3 336.3L1619.5 326.8L1620.2 328.1L1612.7 338.0Z" fill="#f9f7f3"/><path d="M1577.3 365.2L1586.1 358.6L1597.0 352.1L1605.8 345.5L1610.2 344.4L1616.8 349.9L1611.3 354.3L1612.4 361.9L1615.7 366.3L1610.2 370.7L1608.0 376.2L1601.4 386.1L1594.8 386.1L1587.2 382.8L1580.6 377.3L1577.3 371.8Z" fill="#f9f7f3"/><path d="M1522.7 350.0L1530.9 354.0L1540.0 359.7L1546.6 365.2L1555.4 372.9L1561.9 377.3L1566.3 381.7L1564.1 393.7L1560.8 393.7L1553.2 383.9L1546.6 375.1L1540.0 368.5L1532.2 362.2L1524.1 354.0Z" fill="#f9f7f3"/><path d="M1563.0 395.9L1572.9 397.0L1586.1 398.1L1595.9 401.4L1601.4 405.8L1594.8 405.8L1583.9 402.5L1570.7 400.3L1564.1 398.1Z" fill="#f9f7f3"/><path d="M1636.5 408.5L1648.6 405.2L1647.5 407.1L1637.6 411.8Z" fill="#f9f7f3"/><path d="M1605.8 404.7L1629.9 405.6L1629.4 407.1L1605.8 406.5Z" fill="#f9f7f3"/><path d="M1650.8 364.1L1654.6 361.9L1655.1 370.7L1651.9 371.8Z" fill="#f9f7f3"/><path d="M1645.3 383.9L1649.7 384.4L1649.7 386.1L1645.3 385.8L1654.0 383.3L1662.8 385.0L1662.8 386.6L1654.0 385.0Z" fill="#f9f7f3"/><path d="M1620.1 369.6L1627.7 367.4L1640.9 365.2L1638.7 368.5L1629.9 369.6L1623.3 374.0L1632.1 375.1L1625.5 379.5L1631.0 389.3L1627.7 391.5L1623.3 385.0L1621.1 393.7L1619.0 393.7L1620.1 381.7Z" fill="#f9f7f3"/><path d="M1662.8 375.1L1671.6 372.9L1678.2 377.3L1682.6 381.7L1693.5 379.5L1704.5 381.7L1715.5 387.2L1724.2 394.8L1730.8 402.5L1741.8 410.2L1742.9 414.6L1726.4 410.2L1715.5 408.0L1704.5 408.0L1695.7 403.6L1691.3 397.0L1682.6 390.4L1673.8 386.1L1668.3 381.7L1663.9 378.4Z" fill="#f9f7f3"/><path d="M1339.9 421.7L1343.1 433.5L1339.0 447.0L1335.6 459.2L1331.0 468.0L1327.0 474.2L1320.5 475.0L1317.4 465.0L1317.4 448.5L1322.7 439.9L1331.3 432.0L1337.0 426.0Z" fill="#f9f7f3"/><path d="M1595.0 461.8L1597.4 457.1L1613.7 452.4L1630.1 440.7L1648.8 429.1L1658.1 431.4L1662.8 422.1L1681.5 419.7L1686.2 426.7L1695.5 436.1L1704.9 438.4L1709.5 422.1L1711.9 417.4L1718.9 431.4L1723.6 445.4L1737.6 457.1L1746.9 464.1L1746.9 517.9L1742.2 520.2L1732.9 534.2L1714.2 538.9L1702.5 534.2L1697.9 524.9L1690.8 520.2L1686.2 513.2L1676.8 506.2L1660.5 503.8L1641.8 510.8L1623.1 515.5L1611.4 520.2L1602.1 515.5L1600.9 496.8L1595.0 480.5Z" fill="#f9f7f3"/><path d="M1718.9 550.6L1732.9 550.6L1730.6 562.2L1723.6 564.6Z" fill="#f9f7f3"/><path d="M1832.2 520.2L1839.2 529.5L1852.5 534.7L1848.6 542.4L1841.5 544.7L1836.9 552.9L1828.7 555.7L1833.4 545.9L1836.9 536.5Z" fill="#f9f7f3"/>
<g clip-path="url(#lc)">
<path d="M646.0 197.0L648.7 198.3L653.9 205.4L659.2 214.6L664.4 221.1L672.2 228.9L676.1 234.2L678.7 242.0L682.7 251.1L687.9 257.7L694.4 262.9L699.6 269.4L705.5 276.6L704.2 277.8L704.9 273.3L699.6 265.5L693.1 257.7L687.9 249.8L684.6 240.7L684.0 238.1L690.5 239.4L693.1 247.2L700.9 256.4L708.8 262.9L715.3 268.1L719.2 276.0L721.2 286.4L727.1 294.2L744.0 303.4L757.1 306.0L770.1 308.6L780.6 313.8L789.7 320.1L802.9 330.8L813.4 339.1L821.7 341.2L834.3 339.1L836.0 336.5L823.8 333.9L813.4 330.8L809.2 320.3L810.6 311.2L802.8 308.6L791.1 302.5L795.4 293.7L795.4 282.7L782.3 287.1L777.9 298.1L773.5 298.1L760.4 295.9L753.8 287.1L754.5 285.1L753.2 273.3L754.5 262.9L758.4 253.7L767.5 247.2L779.3 247.2L789.7 244.6L805.4 244.6L810.6 245.9L815.8 252.4L819.7 260.3L821.7 266.8L823.7 262.9L823.7 252.4L827.6 236.8L834.1 226.3L840.6 217.2L841.9 208.1L847.2 198.3L849.8 195.0Z" fill="#b9ebd5"/><path d="M805.0 280.6L817.5 277.5L828.0 280.6L840.5 286.9L846.8 290.0L838.4 290.7L828.0 288.0L813.4 281.7Z" fill="#b9ebd5"/><path d="M848.9 287.3L861.4 286.9L867.7 293.2L857.2 297.3L846.8 296.3Z" fill="#b9ebd5"/><path d="M829.0 296.9L838.4 296.9L837.4 298.6L830.1 298.6Z" fill="#b9ebd5"/><path d="M872.9 296.7L880.2 297.1L879.8 298.6L872.9 298.4Z" fill="#b9ebd5"/><path d="M829.0 268.1L832.2 270.2L833.2 274.4L831.1 273.3Z" fill="#b9ebd5"/><path d="M834.3 338.7L843.6 329.4L856.1 323.1L857.7 332.5L871.7 329.4L893.5 332.5L909.1 338.7L924.7 348.1L937.2 357.4L943.4 369.9L955.9 376.1L974.6 382.3L993.3 388.6L1005.7 397.9L1004.2 413.5L990.1 422.9L987.0 444.7L980.8 457.2L959.0 469.6L946.5 482.1L943.4 497.7L930.9 510.1L915.3 519.5L906.0 525.7L909.1 535.1L893.5 538.2L884.2 550.7L881.0 563.1L874.8 572.5L868.6 585.0L874.8 597.4L868.6 609.9L874.8 622.4L881.0 634.8L868.6 636.4L856.1 628.6L846.8 613.0L843.6 594.3L848.3 569.4L849.9 538.2L856.1 507.0L860.8 475.9L862.3 450.9L859.2 438.5L840.5 426.0L829.6 413.5L818.7 391.7L820.3 382.3L828.1 366.8L831.2 354.3Z" fill="#b9ebd5"/><path d="M1068.0 318.0L1110.0 312.0L1145.0 318.0L1170.0 325.0L1205.0 325.0L1240.0 330.0L1270.0 318.0L1300.0 313.0L1312.0 326.0L1318.0 345.0L1312.0 362.0L1325.0 385.0L1312.0 440.0L1290.0 446.0L1272.0 466.0L1255.0 462.0L1249.0 441.0L1228.0 444.0L1189.0 440.0L1180.0 400.0L1170.0 352.0L1068.0 355.0Z" fill="#b9ebd5"/><path d="M1272.0 464.0L1290.0 450.0L1290.0 480.0L1275.0 500.0L1258.0 512.0L1235.0 520.0L1214.0 520.0L1212.0 505.0L1230.0 508.0L1252.0 500.0L1266.0 482.0Z" fill="#b9ebd5"/><path d="M1104.0 240.0L1112.0 228.0L1118.0 220.0L1130.0 218.0L1120.0 226.0L1110.0 238.0Z" fill="#b9ebd5"/><path d="M1415.0 275.0L1430.0 262.0L1445.0 240.0L1455.0 222.0L1520.0 224.0L1540.0 222.0L1600.0 212.0L1619.0 198.0L1700.0 198.0L1700.0 430.0L1500.0 430.0L1450.0 345.0L1420.0 290.0Z" fill="#b9ebd5"/><path d="M1459.5 331.7L1465.3 337.6L1466.0 344.6L1461.3 344.6L1459.0 337.6Z" fill="#b9ebd5"/><path d="M1640.4 197.0L1639.7 205.4L1647.6 210.4L1645.5 224.8L1651.3 223.4L1657.0 217.6L1657.7 210.4L1653.4 201.8L1649.8 197.0Z" fill="#b9ebd5"/><path d="M1665.7 226.3L1676.5 220.5L1683.7 219.8L1690.9 214.0L1698.1 206.8L1702.4 197.0L1708.2 197.0L1705.3 206.8L1702.4 214.0L1701.0 220.5L1694.5 224.8L1683.7 228.4L1672.9 227.7L1666.4 227.7Z" fill="#b9ebd5"/><path d="M1659.2 229.9L1666.4 228.4L1667.8 234.2L1665.0 240.0L1661.3 239.2L1660.6 233.5Z" fill="#b9ebd5"/><path d="M1670.0 231.0L1678.0 226.5L1679.0 230.0L1671.0 234.0Z" fill="#b9ebd5"/><path d="M1620.8 269.5L1627.6 268.2L1624.9 280.4L1621.5 279.1Z" fill="#b9ebd5"/><path d="M1575.9 291.3L1584.0 290.0L1584.0 295.4L1578.6 296.8Z" fill="#b9ebd5"/><path d="M1622.9 298.2L1629.0 296.8L1630.4 305.0L1627.6 314.5L1630.4 318.6L1626.3 320.0L1624.2 311.8L1622.2 303.6Z" fill="#b9ebd5"/><path d="M1630.4 339.0L1639.9 333.6L1646.7 336.3L1645.4 344.5L1638.5 345.9L1631.7 343.1Z" fill="#b9ebd5"/><path d="M1629.0 325.4L1639.9 324.1L1641.3 330.9L1631.7 332.2Z" fill="#b9ebd5"/><path d="M1611.3 336.3L1619.5 326.8L1620.2 328.1L1612.7 338.0Z" fill="#b9ebd5"/><path d="M1577.3 365.2L1586.1 358.6L1597.0 352.1L1605.8 345.5L1610.2 344.4L1616.8 349.9L1611.3 354.3L1612.4 361.9L1615.7 366.3L1610.2 370.7L1608.0 376.2L1601.4 386.1L1594.8 386.1L1587.2 382.8L1580.6 377.3L1577.3 371.8Z" fill="#b9ebd5"/><path d="M1522.7 350.0L1530.9 354.0L1540.0 359.7L1546.6 365.2L1555.4 372.9L1561.9 377.3L1566.3 381.7L1564.1 393.7L1560.8 393.7L1553.2 383.9L1546.6 375.1L1540.0 368.5L1532.2 362.2L1524.1 354.0Z" fill="#b9ebd5"/><path d="M1563.0 395.9L1572.9 397.0L1586.1 398.1L1595.9 401.4L1601.4 405.8L1594.8 405.8L1583.9 402.5L1570.7 400.3L1564.1 398.1Z" fill="#b9ebd5"/><path d="M1636.5 408.5L1648.6 405.2L1647.5 407.1L1637.6 411.8Z" fill="#b9ebd5"/><path d="M1605.8 404.7L1629.9 405.6L1629.4 407.1L1605.8 406.5Z" fill="#b9ebd5"/><path d="M1650.8 364.1L1654.6 361.9L1655.1 370.7L1651.9 371.8Z" fill="#b9ebd5"/><path d="M1645.3 383.9L1649.7 384.4L1649.7 386.1L1645.3 385.8L1654.0 383.3L1662.8 385.0L1662.8 386.6L1654.0 385.0Z" fill="#b9ebd5"/><path d="M1620.1 369.6L1627.7 367.4L1640.9 365.2L1638.7 368.5L1629.9 369.6L1623.3 374.0L1632.1 375.1L1625.5 379.5L1631.0 389.3L1627.7 391.5L1623.3 385.0L1621.1 393.7L1619.0 393.7L1620.1 381.7Z" fill="#b9ebd5"/><path d="M1662.8 375.1L1671.6 372.9L1678.2 377.3L1682.6 381.7L1693.5 379.5L1704.5 381.7L1715.5 387.2L1724.2 394.8L1730.8 402.5L1741.8 410.2L1742.9 414.6L1726.4 410.2L1715.5 408.0L1704.5 408.0L1695.7 403.6L1691.3 397.0L1682.6 390.4L1673.8 386.1L1668.3 381.7L1663.9 378.4Z" fill="#b9ebd5"/><path d="M1832.2 520.2L1839.2 529.5L1852.5 534.7L1848.6 542.4L1841.5 544.7L1836.9 552.9L1828.7 555.7L1833.4 545.9L1836.9 536.5Z" fill="#b9ebd5"/><path d="M1339.9 421.7L1343.1 433.5L1339.0 447.0L1335.6 459.2L1331.0 468.0L1327.0 474.2L1320.5 475.0L1317.4 465.0L1317.4 448.5L1322.7 439.9L1331.3 432.0L1337.0 426.0Z" fill="#b9ebd5"/><path d="M1660.0 428.0L1662.0 420.0L1681.0 418.0L1686.0 425.0L1678.0 430.0L1665.0 432.0Z" fill="#b9ebd5"/><path d="M1707.0 425.0L1712.0 415.0L1720.0 432.0L1728.0 448.0L1740.0 458.0L1746.0 462.0L1746.0 530.0L1740.0 528.0L1738.0 495.0L1733.0 468.0L1722.0 452.0L1712.0 440.0Z" fill="#b9ebd5"/><path d="M1598.0 505.0L1606.0 512.0L1616.0 518.0L1606.0 520.0L1600.0 516.0Z" fill="#b9ebd5"/><path d="M1705.0 532.0L1746.0 518.0L1746.0 542.0L1715.0 540.0Z" fill="#b9ebd5"/><path d="M1718.9 550.6L1732.9 550.6L1730.6 562.2L1723.6 564.6Z" fill="#b9ebd5"/><path d="M1106.0 198.0L1143.0 198.0L1140.0 206.0L1125.0 214.0L1116.0 214.0L1110.0 204.0Z" fill="#b9ebd5"/>
<path d="M834.3 338.7L893.5 338.7L940.3 366.8L946.5 397.9L930.9 422.9L893.5 438.5L862.3 422.9L831.2 382.3Z" fill="#a2e3c7"/><path d="M1190.0 345.0L1260.0 345.0L1268.0 380.0L1245.0 402.0L1200.0 396.0Z" fill="#a2e3c7"/><path d="M1520.0 285.0L1540.0 292.0L1545.0 318.0L1530.0 330.0L1520.0 306.0Z" fill="#a2e3c7"/>
<path d="M660.0 197.0L751.0 197.0L750.5 220.1L742.0 241.0L730.0 247.0L737.0 262.0L726.0 276.0L712.0 268.0L700.0 250.0L683.0 236.0L670.0 222.0Z" fill="#f9f7f3"/><path d="M676.0 234.0L684.0 252.0L699.0 269.0L705.0 277.0L700.0 266.0L688.0 250.0L684.0 238.0Z" fill="#f9f7f3"/><path d="M859.2 519.5L893.5 538.2L884.2 556.9L879.5 575.6L870.1 594.3L874.8 619.3L862.3 631.7L854.6 613.0L853.0 585.0L856.1 544.4Z" fill="#f9f7f3"/><path d="M837.4 426.0L862.3 435.3L874.8 460.3L877.9 491.4L868.6 519.5L860.8 519.5L862.3 475.9L859.2 444.7L835.0 432.0Z" fill="#f9f7f3"/><path d="M1189.3 439.5L1228.2 443.6L1248.6 440.9L1255.4 461.3L1271.8 464.1L1266.3 481.8L1255.4 495.4L1241.8 506.3L1221.3 510.0L1214.5 505.0L1205.0 481.8L1194.1 451.8Z" fill="#f9f7f3"/><path d="M1300.0 326.0L1345.0 325.0L1330.0 350.0L1318.0 358.0L1310.0 345.0Z" fill="#f9f7f3"/><path d="M1380.0 197.0L1545.0 197.0L1540.0 210.0L1526.0 228.0L1455.0 220.0L1432.0 250.0L1415.0 272.0L1380.0 270.0Z" fill="#f9f7f3"/><path d="M1445.7 209.6L1511.5 206.7L1526.1 228.6L1518.8 246.1L1496.9 253.4L1482.3 250.5L1461.8 243.2L1453.0 224.2Z" fill="#f9f7f3"/><path d="M1319.0 448.0L1328.0 442.0L1331.0 452.0L1325.0 468.0L1320.0 466.0Z" fill="#f9f7f3"/>
</g>
<path d="M1119.6 219.0L1126.2 221.2L1133.9 221.2L1144.8 216.8L1155.8 213.5L1166.8 212.4L1175.5 212.4L1183.2 211.4L1186.5 214.6L1185.4 221.2L1188.7 231.1L1199.7 233.3L1210.6 237.7L1218.3 244.3L1221.6 236.6L1228.2 233.3L1235.8 235.5L1243.5 237.7L1260.0 241.0L1276.4 239.9L1283.0 237.7L1286.3 224.5L1287.4 214.6L1276.4 215.7L1265.5 214.6L1254.5 211.4L1247.9 208.1L1243.5 202.6L1236.9 203.7L1233.7 212.4L1230.4 213.5L1224.9 207.0L1210.6 209.2L1205.1 207.0L1207.9 202.6L1206.8 196.0L1143.7 196.0L1142.6 200.4L1139.3 205.9L1133.9 211.4L1122.9 213.5L1117.4 215.2Z" fill="#68cfe5"/><path d="M1272.3 247.5L1280.4 251.6L1287.3 260.4L1295.4 272.7L1302.3 283.6L1307.7 294.5L1313.2 302.7L1314.5 313.6L1317.3 319.7L1314.5 323.8L1310.4 320.4L1306.3 309.5L1300.9 300.0L1295.4 289.1L1290.0 278.2L1284.5 267.3L1279.1 257.7Z" fill="#68cfe5"/><path d="M1338.8 197.1L1356.5 197.1L1356.5 208.6L1350.3 214.8L1341.9 211.7L1337.7 205.4Z" fill="#68cfe5"/>
<path d="M1269 372L1276 370L1279 375L1275 381L1269 379Z" fill="#68cfe5"/><path d="M1259 385L1263 392L1264 402L1262 402L1259 392Z M1279 407L1281 415L1280 425L1278 418Z" fill="#68cfe5"/>
<path d="M1192.0 207.0L1203.0 208.1L1201.9 213.5L1195.3 211.4ZM1235.8 220.1L1245.7 221.0L1244.6 222.3L1236.9 221.9ZM1270.9 221.4L1278.6 220.3L1276.4 223.4L1272.0 223.4ZM1174.4 196.0L1181.0 196.0L1179.9 201.5L1175.5 201.5Z" fill="#f9f7f3"/>
<path d="M424.0 889.0L424.8 890.2L459.7 894.1L489.4 898.1L511.3 870.3L535.1 854.4L547.0 842.5L570.8 828.7L586.7 822.7L610.5 822.7L634.3 810.8L658.1 812.8L681.9 818.7L697.8 822.7L709.7 834.6L725.6 830.6L737.5 834.6L733.5 810.8L733.5 794.9L749.4 789.0L761.3 796.9L785.1 798.9L801.0 806.8L812.9 814.8L828.7 798.9L852.5 806.8L844.6 787.0L840.6 763.2L860.5 755.2L876.3 751.3L872.4 731.4L888.3 711.6L908.1 699.7L920.0 699.7L902.1 719.5L900.2 759.2L902.1 791.0L898.2 830.6L927.9 858.4L947.8 874.3L967.6 886.2L991.4 882.2L1011.3 862.4L1035.1 842.5L1043.0 818.7L1054.9 806.8L1070.8 787.0L1094.6 775.1L1138.3 765.2L1138.3 766.0L1159.6 767.7L1180.9 764.3L1202.1 761.3L1219.1 765.5L1240.4 767.7L1257.4 759.1L1278.7 752.8L1300.0 748.5L1321.3 738.7L1338.3 729.4L1355.3 724.3L1372.3 729.4L1389.4 740.0L1419.1 744.3L1425.5 742.1L1423.4 752.8L1444.7 761.3L1457.4 746.4L1468.1 725.1L1474.5 731.5L1491.5 725.1L1508.5 727.2L1525.5 716.6L1546.8 716.6L1563.8 729.4L1580.9 731.5L1593.6 725.1L1610.6 732.8L1627.7 727.2L1644.7 729.4L1653.2 733.6L1666.0 727.2L1678.7 720.9L1695.7 729.4L1721.3 737.0L1771.3 802.3L1819.1 869.8L1831.9 871.9L1848.9 878.3L1861.0 889.0L1861.0 989.0L424.0 989.0Z" fill="#faf9f8"/>
<path d="M520 289l3 1 1 3-3 0z M1416 596h4v2.5h-4z M993 630l5-1 0.5 2-5 1z M512 287h1.5v1.5h-1.5z" fill="#f4f2ee"/>
<path d="M676.1 233.5L684.0 233.5L699.6 240.0L711.4 240.0L716.6 237.4L724.4 244.6L731.0 249.8L737.5 247.2L750.5 262.9L754.5 263.5M782.0 300.0L790.0 298.0L794.0 292.0M797.0 310.0L806.0 312.0M808.0 320.0L818.0 318.0M857.7 324.7L856.1 338.7L874.8 344.9L871.7 360.5L881.0 369.9L893.5 363.6L906.0 360.5L912.2 366.8L924.7 360.5M828.1 366.8L846.8 366.8L859.2 373.0L865.5 382.3L859.2 391.7L849.9 401.0L849.9 410.4L868.6 416.6L881.0 413.5L893.5 416.6L906.0 438.5M818.7 382.3L840.5 379.2L856.1 391.7M865.5 438.5L868.6 460.3L874.8 466.5L884.2 460.3L893.5 454.0L909.1 450.9L918.5 466.5L924.7 475.9L915.3 485.2L912.2 482.1M862.3 441.6L865.5 460.3L874.8 469.6L870.1 482.1L867.0 507.0L860.8 538.2L857.7 569.4L856.1 600.5L865.5 631.7M893.5 454.0L896.6 466.5L909.1 466.5L909.1 479.0L924.7 482.1L927.8 472.7M912.2 497.7L924.7 500.8L934.0 510.1M1107.8 258.1L1133.5 253.4L1133.5 237.1L1128.8 218.4M1117.1 269.8L1156.9 293.2L1189.6 275.6L1203.6 276.8L1241.0 290.8L1241.0 237.1M1180.3 237.1L1180.3 265.1L1189.6 275.6M1241.0 281.5L1285.4 281.5M1075.1 283.8L1117.1 283.8L1117.1 269.8M1119.5 269.8L1119.5 307.2L1156.9 309.5L1156.9 293.2M1156.9 316.6L1203.6 311.9L1203.6 276.8M1203.6 311.9L1231.7 316.6L1234.0 290.8M1199.0 325.9L1203.6 339.9L1217.7 354.0L1264.4 356.3L1280.8 349.3L1287.8 335.3M1231.7 316.6L1238.7 330.6L1259.7 325.9L1273.8 330.6L1292.5 316.6M1180.3 363.3L1217.7 363.3L1217.7 377.3L1231.7 386.7L1257.4 400.7L1269.1 412.4L1297.1 419.4M1264.4 356.3L1269.1 377.3L1285.4 382.0L1299.5 389.0M1280.8 349.3L1285.4 358.6L1304.1 363.3L1320.5 358.6M1189.6 398.4L1217.7 398.4L1229.3 412.4L1243.4 414.7L1245.7 435.1M1189.3 440.2L1235.0 443.6L1255.4 438.2L1273.1 427.3L1277.2 413.6L1301.8 413.6M1226.8 443.6L1222.7 488.6L1209.1 490.0M1222.7 473.6L1225.4 481.8L1236.3 477.7L1247.2 473.6L1255.4 462.7L1266.3 462.7L1269.1 481.8L1273.1 481.8M1250.0 440.9L1247.2 454.5L1258.1 461.3M1229.5 400.0L1230.9 416.4L1239.1 417.7L1255.4 421.8L1274.5 428.6M1230.9 423.2L1230.9 440.9M1279.2 238.9L1282.4 232.6L1287.6 213.8L1316.8 210.7L1325.2 219.0L1324.2 226.3L1333.6 242.0L1334.6 246.2M1285.5 234.7L1306.4 225.3M1281.3 249.3L1291.8 238.9L1299.1 235.7L1323.1 249.3L1333.6 251.4M1318.9 199.2L1323.1 215.9L1325.2 219.0M1350.3 272.3L1361.7 277.5L1364.9 283.8L1352.3 294.9M1356.5 210.7L1370.1 206.5L1385.8 219.0L1383.7 236.8L1386.8 247.2L1394.1 257.7L1388.9 267.1M1386.8 247.2L1401.4 248.3L1419.2 234.7L1427.5 205.4L1435.9 200.2M1412.9 270.2L1421.3 253.5L1431.7 251.4L1432.8 243.0M1418.0 256.3L1423.8 268.0L1416.5 273.9M1461.8 243.2L1482.2 256.3L1508.5 256.3L1520.2 252.0L1531.9 253.4L1534.8 271.0L1548.0 279.7L1562.6 276.8L1569.9 284.1M1493.9 260.7L1496.9 282.6L1498.3 276.8M1508.5 256.3L1507.1 275.3M1534.8 276.8L1531.9 294.3L1537.8 311.9L1534.8 326.5M1548.0 279.7L1552.4 297.2L1562.6 300.2L1569.9 311.9M1552.4 314.8L1567.0 313.3L1562.6 326.5M1704.0 380.0L1704.0 404.0" stroke="#555" stroke-width="0.8" fill="none" opacity="0.75"/>
<path d="M1656.3 431.4V503.8M1656.3 479.3H1704.9M1692.7 438.4V479.3M1704.9 479.3V535.4M1704.9 492.1H1744M1704.9 524.9H1740M687.9 212H764.9M707.5 212V240M731.6 212V236.8M707.5 236.8H731.6M749 199V245M764.9 206V245M788 212V250M800 212V245M812 215V250M777 220H830" stroke="#888" stroke-width="0.6" stroke-dasharray="1.2 1.6" fill="none" opacity="0.55"/>
<path d="M425 371.6H1860" stroke="#6f8a92" stroke-width="0.9" stroke-dasharray="4 3" fill="none"/>
<path d="M491.7 348.9H519.7L549.6 418.3H529.7V404.4H471.8L459.8 415.5V429.5L454.6 437.5V569.2L431.9 600 M491.7 348.9V365.7H505.7V379.6H425" stroke="#6f8a92" stroke-width="0.9" stroke-dasharray="4 3" fill="none"/>
<g font-family="Liberation Sans" text-anchor="middle" dominant-baseline="central">
<g font-size="9" font-weight="bold" fill="#3a3a3a" stroke="#fff" stroke-width="2" stroke-opacity="0.7" paint-order="stroke" letter-spacing="-0.15">
<text x="1107.6" y="206.7">Portugal</text>
<text x="1180.7" y="226.1">Tunesië</text>
<text x="1116.8" y="237">Marokko</text>
<text x="1152.6" y="254.2">Algerije</text>
<text x="1211.8" y="259.3">Libië</text>
<text x="1259.3" y="259.3">Egypte</text>
<text x="1089.3" y="265.2">Westelijke</text>
<text x="1089.3" y="274">Sahara</text>
<text x="1322.5" y="274.7">Saudi-Arabië</text>
<text x="1365.3" y="287.1">Oman</text>
<text x="1097.4" y="294">Mauritanië</text>
<text x="1135" y="299.2">Mali</text>
<text x="1180" y="301">Niger</text>
<text x="1216.5" y="311.2">Tsjaad</text>
<text x="1263" y="305.4">Sudan</text>
<text x="1331.7" y="307.6">Jemen</text>
<text x="1135" y="318.2">Burkina</text>
<text x="1135" y="326.6">Faso</text>
<text x="1098.5" y="329.5">Guinee</text>
<text x="1174.1" y="333.2">Nigeria</text>
<text x="1137.6" y="342.3">Ghana</text>
<text x="1299.5" y="337.5">Ethiopië</text>
<text x="1322.5" y="360.2">Somalië</text>
<text x="1188" y="374.1">Gabon</text>
<text x="1292.9" y="369.3">Kenia</text>
<text x="1236.3" y="382.9">Congo-Kinshasa</text>
<text x="1281.2" y="397.1">Tanzania</text>
<text x="1211.8" y="421.6">Angola</text>
<text x="1253.1" y="425.6">Zambia</text>
<text x="1302.4" y="430.4">Mozambique</text>
<text x="1204.5" y="450.1">Namibië</text>
<text x="1261.1" y="448.7">Zimbabwe</text>
<text x="1326.2" y="457.4">Madagaskar</text>
<text x="1236.6" y="461.8">Botswana</text>
<text x="1238.5" y="500.9">Zuid-Afrika</text>
<text x="1297" y="221.3">Syrië</text>
<text x="1313.4" y="232.3">Irak</text>
<text x="1358" y="236.3">Iran</text>
<text x="1283.8" y="202.3">Turkije</text>
<text x="1377.4" y="202.3">Turkmenistan</text>
<text x="1401.1" y="227.9">Afghanistan</text>
<text x="1418.3" y="246.2">Pakistan</text>
<text x="1555.4" y="217.3">China</text>
<text x="1476.8" y="253.5">Nepal</text>
<text x="1459.2" y="277.6">India</text>
<text x="1526.8" y="279.8">Myanmar</text>
<text x="1526.8" y="288.6">(Birma)</text>
<text x="1544.4" y="304.6">Thailand</text>
<text x="1578.4" y="321.1">Vietnam</text>
<text x="1632.1" y="321.1">Filipijnen</text>
<text x="1557.2" y="355.8">Maleisië</text>
<text x="1600.3" y="379.2">Indonesië</text>
<text x="1647.8" y="217.3">Zuid-Korea</text>
<text x="1697.9" y="213.3">Japan</text>
<text x="1723.5" y="395.3">Papua Ne</text>
<text x="1727.1" y="404.1">Guinea</text>
<text x="1677.8" y="474.6">Australia</text>
<text x="1231.9" y="200.1">Griekenland</text>
<text x="737.2" y="199">Stati Uniti</text>
<text x="733.3" y="273">Messico</text>
<text x="827.1" y="283">Kuba</text>
<text x="877" y="290.2">Puerto Rico</text>
<text x="782.4" y="307">Guatemala</text>
<text x="808.3" y="320.9">Nicaragua</text>
<text x="878.2" y="336.5">Venezuela</text>
<text x="909.7" y="345.7">Guyana</text>
<text x="850.2" y="356.1">Kolumbien</text>
<text x="920.9" y="355.3">Suriname</text>
<text x="827.1" y="376">Ecuador</text>
<text x="920.9" y="405.6">Brazilië</text>
<text x="838.2" y="414.8">Peru</text>
<text x="884.2" y="438.7">Bolivia</text>
<text x="908.9" y="466.6">Paraguay</text>
<text x="861.8" y="482.2">Chili</text>
<text x="918.9" y="510.2">Uruguay</text>
<text x="882.2" y="521.3">Argentinië</text>
<text x="1842.2" y="560.6">Zeeland</text>
</g><g font-size="8" fill="#2b8aa6" letter-spacing="1.3">
<text x="459.8" y="238.4">Северный</text>
<text x="459.4" y="248.5">Тихий океан</text>
<text x="980" y="214.8">Noordelijke</text>
<text x="978.8" y="223.5">Atlantische</text>
<text x="978.8" y="232.7">Oceaan</text>
<text x="1083.9" y="481.9">Zuidelijke</text>
<text x="1083.9" y="491">Atlantische</text>
<text x="1083.9" y="500.2">Oceaan</text>
<text x="1460.3" y="457.1">Indische</text>
<text x="1460.3" y="466.2">Oceaan</text>
<text x="492.6" y="745.7">Zuidelijke</text>
<text x="492.6" y="755.6">Oceaan</text>
<text x="582.4" y="489.6">Zuidel</text>
<text x="613.5" y="493.8">ifik</text>
<text x="583.8" y="499.5">Stille Oc</text>
</g><g font-size="8.2" fill="#3795b0">
<text x="782.4" y="264">Golf von</text>
<text x="782.4" y="270.5">Mesiko</text>
<text x="1398.2" y="322.2">Arabische Zee</text>
<text x="1490.7" y="313.8">Golf van</text>
<text x="1490.7" y="320">Bengalen</text>
<text x="1452.3" y="346">Laccadiven Zee</text>
<text x="1332.4" y="321.1">Golf van Aden</text>
<text x="1157" y="353.3">Golf van</text>
<text x="1157" y="359.5">Guinee</text>
<text x="1597.4" y="309">Zuid-Chinese Zee</text>
<text x="1669.8" y="292.2">Filipijnenzee</text>
<text x="1643" y="243.6">Oost-Chinese Zee</text>
<text x="1646.7" y="394.6">Bandazee</text>
<text x="1677.8" y="199">Japanse Zee</text>
<text x="1546.2" y="329.5">Golf van</text>
<text x="1546.2" y="335.7">Thailand</text>
<text x="1692.4" y="406.3">ura Sea</text>
<text x="1665.7" y="517.7">Grote</text>
<text x="1665.7" y="524">Australisch</text>
<text x="1665.7" y="530.5">Bocht</text>
</g><g font-size="7" fill="#777" stroke="#fff" stroke-width="1.5" stroke-opacity="0.6" paint-order="stroke">
<text x="664" y="212">CA</text>
<text x="676" y="199">NV</text>
<text x="697" y="201">UT</text>
<text x="697" y="226">AZ</text>
<text x="719" y="226">NM</text>
<text x="747" y="239">TX</text>
<text x="754" y="220">OK</text>
<text x="774" y="221">AR</text>
<text x="773" y="206">MO</text>
<text x="806" y="209">KY</text>
<text x="822" y="205">WV</text>
<text x="833" y="210">VA</text>
<text x="829" y="219">NC</text>
<text x="822" y="229">SC</text>
<text x="797" y="218">TN</text>
<text x="784" y="231">MS</text>
<text x="798" y="233">AL</text>
<text x="812" y="237">GA</text>
<text x="776" y="244">LA</text>
<text x="816" y="256">FL</text>
<text x="834" y="199">MD</text>
<text x="844" y="202">DE</text>
<text x="885" y="391">AM</text>
<text x="933" y="394">PA</text>
<text x="961" y="391">MA</text>
<text x="985" y="391">CE</text>
<text x="997" y="392">RN</text>
<text x="1002" y="399">PB</text>
<text x="990" y="405">PE</text>
<text x="1002" y="412">AL</text>
<text x="995" y="418">SE</text>
<text x="977" y="421">BA</text>
<text x="950" y="414">TO</text>
<text x="972" y="401">PI</text>
<text x="920" y="423">MT</text>
<text x="891" y="416">RO</text>
<text x="860" y="406">AC</text>
<text x="898" y="365">RR</text>
<text x="935" y="365">AP</text>
<text x="943" y="433">GO</text>
<text x="965" y="442">MG</text>
<text x="982" y="449">ES</text>
<text x="923" y="455">MS</text>
<text x="947" y="464">SP</text>
<text x="970" y="466">RJ</text>
<text x="934" y="473">PR</text>
<text x="942" y="485">SC</text>
<text x="927" y="495">RS</text>
<text x="1443" y="228">JK</text>
<text x="1448" y="237">HP</text>
<text x="1442" y="244">PB</text>
<text x="1458" y="246">UK</text>
<text x="1459" y="255">UP</text>
<text x="1436" y="261">RJ</text>
<text x="1425" y="276">GJ</text>
<text x="1486" y="265">BR</text>
<text x="1504" y="266">ML</text>
<text x="1519" y="265">NL</text>
<text x="1521" y="252">AR</text>
<text x="1490" y="277">WB</text>
<text x="1478" y="288">OD</text>
<text x="1444" y="292">MH</text>
<text x="1459" y="300">TS</text>
<text x="1444" y="312">KA</text>
<text x="1458" y="311">AP</text>
<text x="1456" y="325">TN</text>
<text x="1449" y="336">KL</text>
<text x="1629.1" y="481.5">WA</text>
<text x="1674" y="450.8">NT</text>
<text x="1716.2" y="465.5">QLD</text>
<text x="1679.6" y="496.9">SA</text>
<text x="1724.2" y="509.3">NSW</text>
<text x="1716.2" y="530.2">VIC</text>
<text x="1726" y="556">TAS</text>
<text x="506.7" y="290.6">HI</text>
</g><text x="1232.3" y="855.8" font-size="8.5" font-style="italic" fill="#555" letter-spacing="2.2">ANTARCTICA</text>
</g>
</g>
<path d="M425.5 198V889" stroke="#3f8f9f" stroke-width="1" stroke-dasharray="4 3" opacity="0.6"/><path d="M425.5 889V988" stroke="#e0b0b0" stroke-width="1" stroke-dasharray="4 3"/>
<path d="M1859.5 198V889" stroke="#3f7f8f" stroke-width="1" stroke-dasharray="4 3" opacity="0.6"/><path d="M1859.5 889V988" stroke="#e0b0b0" stroke-width="1" stroke-dasharray="4 3"/>
</svg>
<div style="position:absolute;left:0px;top:990px;width:1915px;height:35px;background:#f0f0f0"></div>
<div style="position:absolute;left:0px;top:1025px;width:1915px;height:2px;background:#1b2a2a"></div>
<div style="position:absolute;left:0px;top:1025px;width:55px;height:2px;background:#263838"></div>
<div style="position:absolute;left:55px;top:1025px;width:360px;height:2px;background:#3a3a3a"></div>
<div style="position:absolute;left:1px;top:995px;width:311px;height:26px;background:#fff;border:1px solid #b0b0b0;border-radius:3px;box-sizing:border-box"></div>
<svg style="position:absolute;left:9px;top:1000px" width="18" height="18" viewBox="0 0 18 18"><circle cx="7" cy="7" r="5.3" fill="none" stroke="#666" stroke-width="1.6"/><path d="M11 11l4.5 4.5" stroke="#666" stroke-width="2"/></svg>
<div style="position:absolute;left:36.00px;top:1001.65px;font:normal 14px/14px 'Liberation Sans',sans-serif;color:#6d6d6d;white-space:pre;transform:scaleX(0.9035);transform-origin:0 0">Type om te lokaliseren (Ctrl+K)</div>
<div style="position:absolute;left:848.10px;top:1001.65px;font:normal 14px/14px 'Liberation Sans',sans-serif;color:#000;white-space:pre;transform:scaleX(0.9518);transform-origin:0 0">Coördinaat</div>
<div style="position:absolute;left:918.5px;top:994.5px;width:152px;height:26px;background:#fff;border:1px solid #b7b7b7;border-radius:3px;box-sizing:border-box"></div>
<div style="position:absolute;left:926.20px;top:1001.65px;font:normal 14px/14px 'Liberation Sans',sans-serif;color:#000;white-space:pre;transform:scaleX(0.9713);transform-origin:0 0">21441857  -10204825</div>
<svg style="position:absolute;left:1075px;top:998px" width="22" height="22" viewBox="0 0 22 22"><path d="M5 3c4-2 9 1 11 5l2 5c1 4-2 7-6 7-3 0-5-2-6-5L4 9c-1-3-1-5 1-6z" fill="#fff" stroke="#111" stroke-width="1.6"/><path d="M8 5l4 6" stroke="#111" stroke-width="2.4"/><circle cx="13" cy="16" r="1.5" fill="none" stroke="#111"/><path d="M15 3l2-2M18 4l2-1M1 14l2 1" stroke="#333" stroke-width="1" stroke-dasharray="1 1"/></svg>
<div style="position:absolute;left:1113.30px;top:1001.65px;font:normal 14px/14px 'Liberation Sans',sans-serif;color:#000;white-space:pre;transform:scaleX(0.8969);transform-origin:0 0">Schaal</div>
<div style="position:absolute;left:1156.4px;top:994.6px;width:95px;height:26.3px;background:#fff;border:1px solid #b7b7b7;border-radius:3px;box-sizing:border-box"></div>
<div style="position:absolute;left:1226.6px;top:995.6px;width:23.6px;height:24.3px;background:#f3f3f3;border-left:1px solid #c8c8c8;box-sizing:border-box"></div>
<svg style="position:absolute;left:1230px;top:1000px" width="16" height="14" viewBox="0 0 16 14"><path d="M3 5h10l-5 5z" fill="#555"/></svg>
<div style="position:absolute;left:1151.50px;top:1001.65px;font:normal 14px/14px 'Liberation Sans',sans-serif;color:#000;white-space:pre;transform:scaleX(1.0060);transform-origin:0 0">131984944</div>
<div style="position:absolute;left:1152.2px;top:995px;width:4.2px;height:26px;background:#f0f0f0"></div>
<div style="position:absolute;left:1156.4px;top:994.6px;width:1px;height:26.3px;background:#b7b7b7"></div>
<div style="position:absolute;left:1157.4px;top:996px;width:2.6px;height:24px;background:rgba(255,255,255,0.75)"></div>
<svg style="position:absolute;left:1265px;top:998px" width="20" height="22" viewBox="0 0 20 22"><path d="M5 10V7a5 5 0 0 1 10 0v3" fill="none" stroke="#6a6a6a" stroke-width="2.2"/><rect x="2.5" y="9.5" width="15" height="10" rx="1.5" fill="#6a6a6a"/></svg>
<div style="position:absolute;left:1294.30px;top:1001.65px;font:normal 14px/14px 'Liberation Sans',sans-serif;color:#000;white-space:pre;transform:scaleX(0.9719);transform-origin:0 0">Vergrootglas</div>
<div style="position:absolute;left:1375.4px;top:995px;width:100px;height:26px;background:#fff;border:1px solid #b7b7b7;border-radius:3px;box-sizing:border-box"></div>
<div style="position:absolute;left:1457.3px;top:996px;width:1px;height:24px;background:#c8c8c8"></div>
<svg style="position:absolute;left:1458px;top:996px" width="17" height="24" viewBox="0 0 17 24"><path d="M4 9l4.5-4.5 4.5 4.5z M4 15l4.5 4.5 4.5-4.5z" fill="#555"/></svg>
<div style="position:absolute;left:1381.40px;top:1001.65px;font:normal 14px/14px 'Liberation Sans',sans-serif;color:#000;white-space:pre;transform:scaleX(0.9913);transform-origin:0 0">100%</div>
<div style="position:absolute;left:1488.40px;top:1001.65px;font:normal 14px/14px 'Liberation Sans',sans-serif;color:#000;white-space:pre;transform:scaleX(0.9536);transform-origin:0 0">Rotatie</div>
<div style="position:absolute;left:1543.3px;top:995px;width:100.2px;height:26px;background:#fff;border:1px solid #b7b7b7;border-radius:3px;box-sizing:border-box"></div>
<div style="position:absolute;left:1625.2px;top:996px;width:1px;height:24px;background:#c8c8c8"></div>
<svg style="position:absolute;left:1626px;top:996px" width="17" height="24" viewBox="0 0 17 24"><path d="M4 9l4.5-4.5 4.5 4.5z M4 15l4.5 4.5 4.5-4.5z" fill="#555"/></svg>
<div style="position:absolute;left:1548.50px;top:1001.65px;font:normal 14px/14px 'Liberation Sans',sans-serif;color:#000;white-space:pre;transform:scaleX(1.0707);transform-origin:0 0">0,0 °</div>
<svg style="position:absolute;left:1651px;top:999px" width="19" height="19" viewBox="0 0 19 19"><rect x="1" y="1" width="16" height="16" fill="#fff" stroke="#9a9a9a"/><path d="M4.5 9l3.5 4.5l6-9" fill="none" stroke="#000" stroke-width="2"/></svg>
<div style="position:absolute;left:1674.90px;top:1001.65px;font:normal 14px/14px 'Liberation Sans',sans-serif;color:#000;white-space:pre;transform:scaleX(0.9828);transform-origin:0 0">(Her)teken</div>
<svg style="position:absolute;left:1759px;top:999px" width="22" height="18" viewBox="0 0 22 18"><g fill="none" stroke="#777" stroke-width="1.3"><circle cx="10" cy="9" r="7"/><ellipse cx="10" cy="9" rx="3" ry="7"/><path d="M3 9h14M4.2 5h11.6M4.2 13h11.6"/><path d="M1 9l3-3M19 9l-3-3"/></g></svg>
<div style="position:absolute;left:1783.00px;top:1001.45px;font:normal 14px/14px 'Liberation Sans',sans-serif;color:#000;white-space:pre;transform:scaleX(0.8993);transform-origin:0 0">EPSG:28992</div>
<svg style="position:absolute;left:1888px;top:998px" width="20" height="20" viewBox="0 0 20 20"><ellipse cx="9.5" cy="8.5" rx="8.5" ry="7.5" fill="#666"/><path d="M12 14l5 4l-1-6z" fill="#666"/><circle cx="5.5" cy="8.5" r="1.3" fill="#fff"/><circle cx="9.5" cy="8.5" r="1.3" fill="#fff"/><circle cx="13.5" cy="8.5" r="1.3" fill="#fff"/></svg>
<svg style="position:absolute;left:0;top:0" width="1915" height="1027"><path d="M1743.6 343.3q0-3 3-3h79q3 0 3 3V657.2h34.5q3.5 0 2.5 3.5L1787 982.5q-1.5 2-3 0L1708 660.7q-1-3.5 2.5-3.5H1743.6z" fill="#ec1c24"/><ellipse cx="1814.4" cy="1005" rx="71.3" ry="30.2" fill="none" stroke="#ec1c24" stroke-width="7.6"/></svg></body></html>
